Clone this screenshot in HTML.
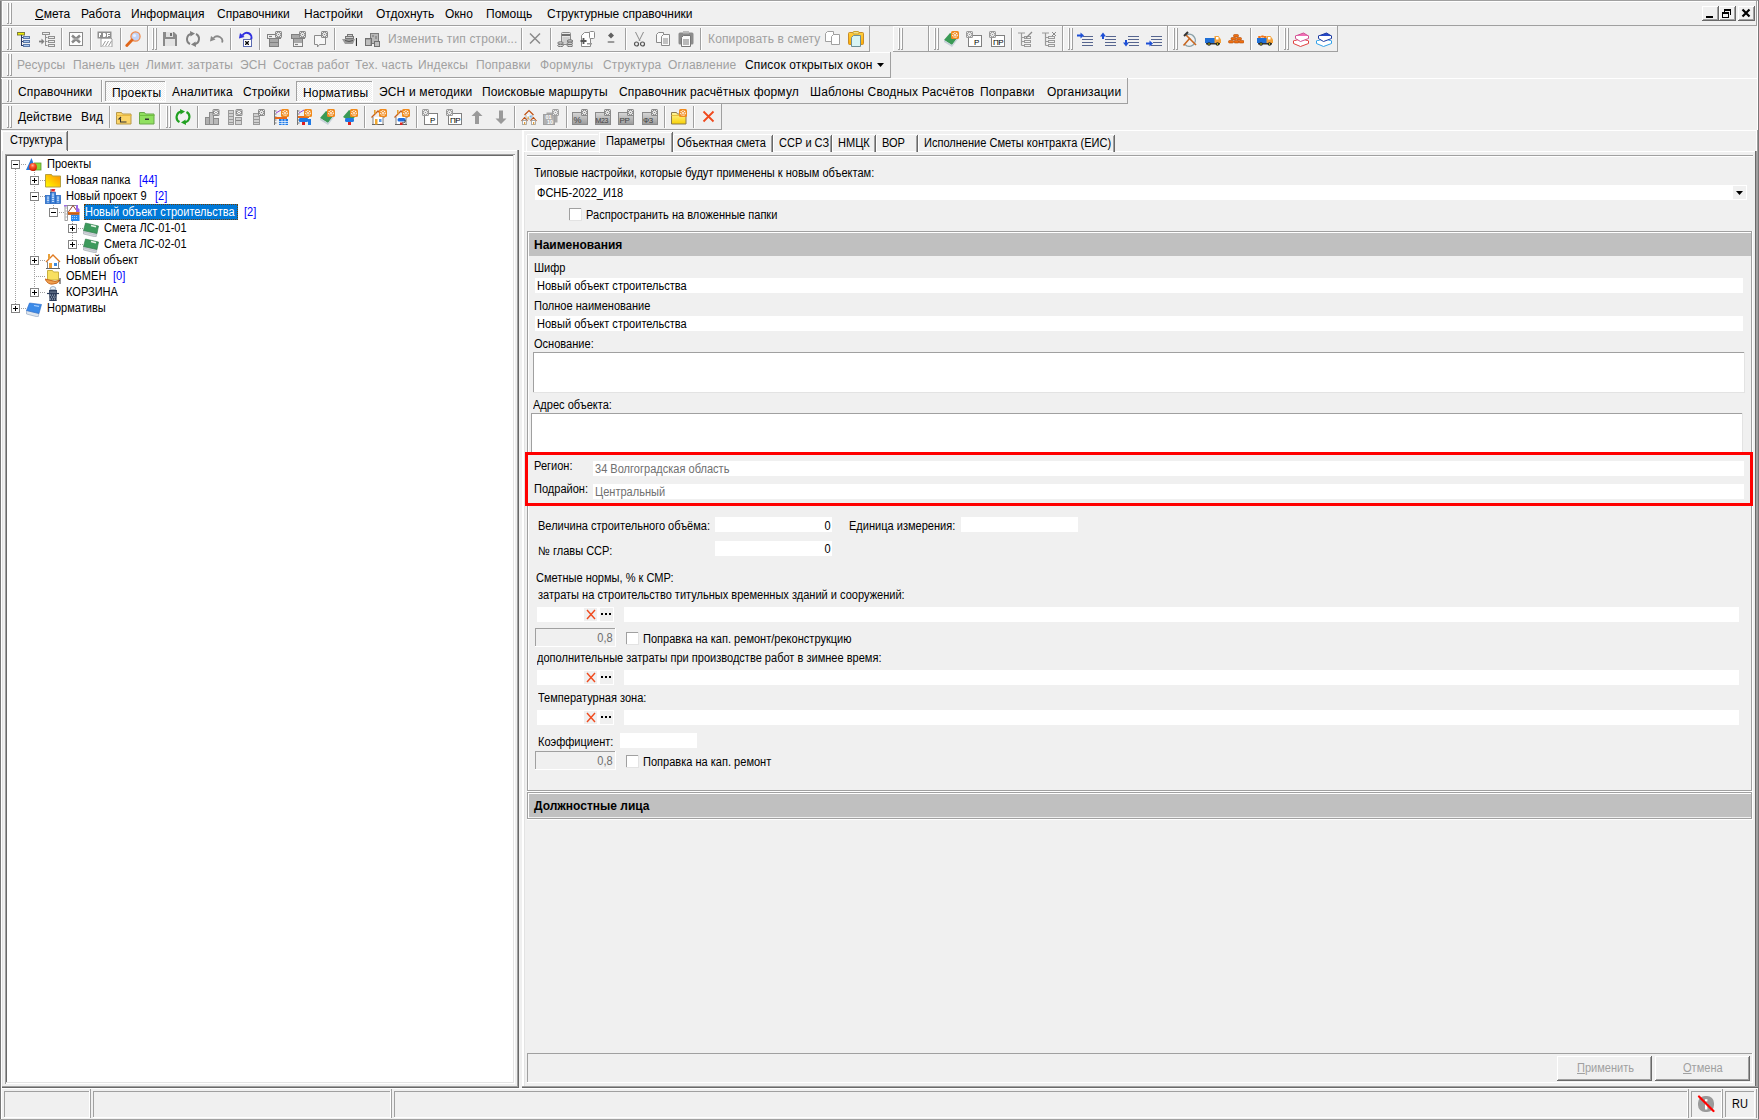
<!DOCTYPE html>
<html><head><meta charset="utf-8">
<style>
html,body{margin:0;padding:0;}
body{width:1759px;height:1120px;overflow:hidden;position:relative;background:#f0f0f0;font-family:"Liberation Sans",sans-serif;}
div,span,svg{position:absolute;}
.t{white-space:pre;line-height:1;}
</style></head><body>
<div style="left:0px;top:0px;width:1px;height:1120px;background:#787878;"></div>
<div style="left:0px;top:0px;width:1759px;height:1px;background:#a0a0a0;"></div>
<div style="left:1px;top:1px;width:1px;height:129px;background:#a0a0a0;"></div>
<div style="left:1px;top:130px;width:1px;height:989px;background:#ffffff;"></div>
<div style="left:2px;top:1px;width:1756px;height:1px;background:#ffffff;"></div>
<div style="left:1758px;top:0px;width:1px;height:1120px;background:#787878;"></div>
<div style="left:0px;top:1119px;width:1759px;height:1px;background:#a0a0a0;"></div>
<div style="left:1757px;top:1px;width:1px;height:129px;background:#ffffff;"></div>
<div style="left:2px;top:1px;width:1755px;height:1px;background:#ffffff;"></div>
<div style="left:2px;top:1px;width:1px;height:25px;background:#ffffff;"></div>
<div style="left:2px;top:25px;width:1755px;height:1px;background:#a0a0a0;"></div>
<div style="left:1756px;top:1px;width:1px;height:25px;background:#a0a0a0;"></div>
<div style="left:7px;top:3px;width:1px;height:21px;background:#ffffff;"></div>
<div style="left:8px;top:3px;width:1px;height:21px;background:#a0a0a0;"></div>
<div style="left:7px;top:23px;width:1px;height:1px;background:#a0a0a0;"></div>
<div style="left:10px;top:3px;width:1px;height:21px;background:#ffffff;"></div>
<div style="left:11px;top:3px;width:1px;height:21px;background:#a0a0a0;"></div>
<div style="left:10px;top:23px;width:1px;height:1px;background:#a0a0a0;"></div>
<span class="t" style="left:35px;top:7.84px;font-size:12px;color:#000;"><u>С</u>мета</span>
<span class="t" style="left:81px;top:7.84px;font-size:12px;color:#000;">Работа</span>
<span class="t" style="left:131px;top:7.84px;font-size:12px;color:#000;">Информация</span>
<span class="t" style="left:217px;top:7.84px;font-size:12px;color:#000;">Справочники</span>
<span class="t" style="left:304px;top:7.84px;font-size:12px;color:#000;">Настройки</span>
<span class="t" style="left:376px;top:7.84px;font-size:12px;color:#000;">Отдохнуть</span>
<span class="t" style="left:445px;top:7.84px;font-size:12px;color:#000;">Окно</span>
<span class="t" style="left:486px;top:7.84px;font-size:12px;color:#000;">Помощь</span>
<span class="t" style="left:547px;top:7.84px;font-size:12px;color:#000;">Структурные справочники</span>
<div style="left:1702px;top:6px;width:17px;height:15px;background:#f0f0f0;"></div>
<div style="left:1702px;top:6px;width:17px;height:1px;background:#ffffff;"></div>
<div style="left:1702px;top:6px;width:1px;height:15px;background:#ffffff;"></div>
<div style="left:1702px;top:20px;width:17px;height:1px;background:#696969;"></div>
<div style="left:1718px;top:6px;width:1px;height:15px;background:#696969;"></div>
<div style="left:1703px;top:19px;width:15px;height:1px;background:#a0a0a0;"></div>
<div style="left:1717px;top:7px;width:1px;height:13px;background:#a0a0a0;"></div>
<div style="left:1719px;top:6px;width:17px;height:15px;background:#f0f0f0;"></div>
<div style="left:1719px;top:6px;width:17px;height:1px;background:#ffffff;"></div>
<div style="left:1719px;top:6px;width:1px;height:15px;background:#ffffff;"></div>
<div style="left:1719px;top:20px;width:17px;height:1px;background:#696969;"></div>
<div style="left:1735px;top:6px;width:1px;height:15px;background:#696969;"></div>
<div style="left:1720px;top:19px;width:15px;height:1px;background:#a0a0a0;"></div>
<div style="left:1734px;top:7px;width:1px;height:13px;background:#a0a0a0;"></div>
<div style="left:1738px;top:6px;width:17px;height:15px;background:#f0f0f0;"></div>
<div style="left:1738px;top:6px;width:17px;height:1px;background:#ffffff;"></div>
<div style="left:1738px;top:6px;width:1px;height:15px;background:#ffffff;"></div>
<div style="left:1738px;top:20px;width:17px;height:1px;background:#696969;"></div>
<div style="left:1754px;top:6px;width:1px;height:15px;background:#696969;"></div>
<div style="left:1739px;top:19px;width:15px;height:1px;background:#a0a0a0;"></div>
<div style="left:1753px;top:7px;width:1px;height:13px;background:#a0a0a0;"></div>
<div style="left:1706px;top:16px;width:7px;height:2px;background:#000;"></div>
<div style="left:1724px;top:9px;width:7px;height:2px;background:#000;"></div>
<div style="left:1730px;top:11px;width:1px;height:4px;background:#000;"></div>
<div style="left:1724px;top:11px;width:1px;height:1px;background:#000;"></div>
<div style="left:1722px;top:12px;width:7px;height:2px;background:#000;"></div>
<div style="left:1722px;top:14px;width:1px;height:4px;background:#000;"></div>
<div style="left:1728px;top:14px;width:1px;height:4px;background:#000;"></div>
<div style="left:1722px;top:17px;width:7px;height:1px;background:#000;"></div>
<svg style="left:1741px;top:8px;" width="11" height="11" viewBox="0 0 11 11"><path d="M1.5 1.5L8.5 8.5M8.5 1.5L1.5 8.5" stroke="#000" stroke-width="2.2"/></svg>
<div style="left:2px;top:26px;width:146px;height:1px;background:#ffffff;"></div>
<div style="left:2px;top:26px;width:1px;height:26px;background:#ffffff;"></div>
<div style="left:2px;top:51px;width:146px;height:1px;background:#a0a0a0;"></div>
<div style="left:147px;top:26px;width:1px;height:26px;background:#a0a0a0;"></div>
<div style="left:148px;top:26px;width:722px;height:1px;background:#ffffff;"></div>
<div style="left:148px;top:26px;width:1px;height:26px;background:#ffffff;"></div>
<div style="left:148px;top:51px;width:722px;height:1px;background:#a0a0a0;"></div>
<div style="left:869px;top:26px;width:1px;height:26px;background:#a0a0a0;"></div>
<div style="left:893px;top:26px;width:36px;height:1px;background:#ffffff;"></div>
<div style="left:893px;top:26px;width:1px;height:26px;background:#ffffff;"></div>
<div style="left:893px;top:51px;width:36px;height:1px;background:#a0a0a0;"></div>
<div style="left:928px;top:26px;width:1px;height:26px;background:#a0a0a0;"></div>
<div style="left:929px;top:26px;width:134px;height:1px;background:#ffffff;"></div>
<div style="left:929px;top:26px;width:1px;height:26px;background:#ffffff;"></div>
<div style="left:929px;top:51px;width:134px;height:1px;background:#a0a0a0;"></div>
<div style="left:1062px;top:26px;width:1px;height:26px;background:#a0a0a0;"></div>
<div style="left:1063px;top:26px;width:105px;height:1px;background:#ffffff;"></div>
<div style="left:1063px;top:26px;width:1px;height:26px;background:#ffffff;"></div>
<div style="left:1063px;top:51px;width:105px;height:1px;background:#a0a0a0;"></div>
<div style="left:1167px;top:26px;width:1px;height:26px;background:#a0a0a0;"></div>
<div style="left:1168px;top:26px;width:111px;height:1px;background:#ffffff;"></div>
<div style="left:1168px;top:26px;width:1px;height:26px;background:#ffffff;"></div>
<div style="left:1168px;top:51px;width:111px;height:1px;background:#a0a0a0;"></div>
<div style="left:1278px;top:26px;width:1px;height:26px;background:#a0a0a0;"></div>
<div style="left:1279px;top:26px;width:59px;height:1px;background:#ffffff;"></div>
<div style="left:1279px;top:26px;width:1px;height:26px;background:#ffffff;"></div>
<div style="left:1279px;top:51px;width:59px;height:1px;background:#a0a0a0;"></div>
<div style="left:1337px;top:26px;width:1px;height:26px;background:#a0a0a0;"></div>
<div style="left:2px;top:52px;width:889px;height:1px;background:#ffffff;"></div>
<div style="left:2px;top:52px;width:1px;height:26px;background:#ffffff;"></div>
<div style="left:2px;top:77px;width:889px;height:1px;background:#a0a0a0;"></div>
<div style="left:890px;top:52px;width:1px;height:26px;background:#a0a0a0;"></div>
<div style="left:1px;top:78px;width:1757px;height:1px;background:#ffffff;"></div>
<div style="left:2px;top:78px;width:1126px;height:1px;background:#ffffff;"></div>
<div style="left:2px;top:78px;width:1px;height:26px;background:#ffffff;"></div>
<div style="left:2px;top:103px;width:1126px;height:1px;background:#a0a0a0;"></div>
<div style="left:1127px;top:78px;width:1px;height:26px;background:#a0a0a0;"></div>
<div style="left:2px;top:104px;width:158px;height:1px;background:#ffffff;"></div>
<div style="left:2px;top:104px;width:1px;height:26px;background:#ffffff;"></div>
<div style="left:2px;top:129px;width:158px;height:1px;background:#a0a0a0;"></div>
<div style="left:159px;top:104px;width:1px;height:26px;background:#a0a0a0;"></div>
<div style="left:160px;top:104px;width:562px;height:1px;background:#ffffff;"></div>
<div style="left:160px;top:104px;width:1px;height:26px;background:#ffffff;"></div>
<div style="left:160px;top:129px;width:562px;height:1px;background:#a0a0a0;"></div>
<div style="left:721px;top:104px;width:1px;height:26px;background:#a0a0a0;"></div>
<div style="left:7px;top:28px;width:1px;height:22px;background:#ffffff;"></div>
<div style="left:8px;top:28px;width:1px;height:22px;background:#a0a0a0;"></div>
<div style="left:7px;top:49px;width:1px;height:1px;background:#a0a0a0;"></div>
<div style="left:10px;top:28px;width:1px;height:22px;background:#ffffff;"></div>
<div style="left:11px;top:28px;width:1px;height:22px;background:#a0a0a0;"></div>
<div style="left:10px;top:49px;width:1px;height:1px;background:#a0a0a0;"></div>
<div style="left:152px;top:28px;width:1px;height:22px;background:#ffffff;"></div>
<div style="left:153px;top:28px;width:1px;height:22px;background:#a0a0a0;"></div>
<div style="left:152px;top:49px;width:1px;height:1px;background:#a0a0a0;"></div>
<div style="left:155px;top:28px;width:1px;height:22px;background:#ffffff;"></div>
<div style="left:156px;top:28px;width:1px;height:22px;background:#a0a0a0;"></div>
<div style="left:155px;top:49px;width:1px;height:1px;background:#a0a0a0;"></div>
<div style="left:898px;top:28px;width:1px;height:22px;background:#ffffff;"></div>
<div style="left:899px;top:28px;width:1px;height:22px;background:#a0a0a0;"></div>
<div style="left:898px;top:49px;width:1px;height:1px;background:#a0a0a0;"></div>
<div style="left:901px;top:28px;width:1px;height:22px;background:#ffffff;"></div>
<div style="left:902px;top:28px;width:1px;height:22px;background:#a0a0a0;"></div>
<div style="left:901px;top:49px;width:1px;height:1px;background:#a0a0a0;"></div>
<div style="left:934px;top:28px;width:1px;height:22px;background:#ffffff;"></div>
<div style="left:935px;top:28px;width:1px;height:22px;background:#a0a0a0;"></div>
<div style="left:934px;top:49px;width:1px;height:1px;background:#a0a0a0;"></div>
<div style="left:937px;top:28px;width:1px;height:22px;background:#ffffff;"></div>
<div style="left:938px;top:28px;width:1px;height:22px;background:#a0a0a0;"></div>
<div style="left:937px;top:49px;width:1px;height:1px;background:#a0a0a0;"></div>
<div style="left:1068px;top:28px;width:1px;height:22px;background:#ffffff;"></div>
<div style="left:1069px;top:28px;width:1px;height:22px;background:#a0a0a0;"></div>
<div style="left:1068px;top:49px;width:1px;height:1px;background:#a0a0a0;"></div>
<div style="left:1071px;top:28px;width:1px;height:22px;background:#ffffff;"></div>
<div style="left:1072px;top:28px;width:1px;height:22px;background:#a0a0a0;"></div>
<div style="left:1071px;top:49px;width:1px;height:1px;background:#a0a0a0;"></div>
<div style="left:1173px;top:28px;width:1px;height:22px;background:#ffffff;"></div>
<div style="left:1174px;top:28px;width:1px;height:22px;background:#a0a0a0;"></div>
<div style="left:1173px;top:49px;width:1px;height:1px;background:#a0a0a0;"></div>
<div style="left:1176px;top:28px;width:1px;height:22px;background:#ffffff;"></div>
<div style="left:1177px;top:28px;width:1px;height:22px;background:#a0a0a0;"></div>
<div style="left:1176px;top:49px;width:1px;height:1px;background:#a0a0a0;"></div>
<div style="left:1284px;top:28px;width:1px;height:22px;background:#ffffff;"></div>
<div style="left:1285px;top:28px;width:1px;height:22px;background:#a0a0a0;"></div>
<div style="left:1284px;top:49px;width:1px;height:1px;background:#a0a0a0;"></div>
<div style="left:1287px;top:28px;width:1px;height:22px;background:#ffffff;"></div>
<div style="left:1288px;top:28px;width:1px;height:22px;background:#a0a0a0;"></div>
<div style="left:1287px;top:49px;width:1px;height:1px;background:#a0a0a0;"></div>
<div style="left:61px;top:28px;width:1px;height:22px;background:#a0a0a0;"></div>
<div style="left:62px;top:28px;width:1px;height:22px;background:#ffffff;"></div>
<div style="left:90px;top:28px;width:1px;height:22px;background:#a0a0a0;"></div>
<div style="left:91px;top:28px;width:1px;height:22px;background:#ffffff;"></div>
<div style="left:120px;top:28px;width:1px;height:22px;background:#a0a0a0;"></div>
<div style="left:121px;top:28px;width:1px;height:22px;background:#ffffff;"></div>
<div style="left:230px;top:28px;width:1px;height:22px;background:#a0a0a0;"></div>
<div style="left:231px;top:28px;width:1px;height:22px;background:#ffffff;"></div>
<div style="left:259px;top:28px;width:1px;height:22px;background:#a0a0a0;"></div>
<div style="left:260px;top:28px;width:1px;height:22px;background:#ffffff;"></div>
<div style="left:334px;top:28px;width:1px;height:22px;background:#a0a0a0;"></div>
<div style="left:335px;top:28px;width:1px;height:22px;background:#ffffff;"></div>
<div style="left:521px;top:28px;width:1px;height:22px;background:#a0a0a0;"></div>
<div style="left:522px;top:28px;width:1px;height:22px;background:#ffffff;"></div>
<div style="left:550px;top:28px;width:1px;height:22px;background:#a0a0a0;"></div>
<div style="left:551px;top:28px;width:1px;height:22px;background:#ffffff;"></div>
<div style="left:625px;top:28px;width:1px;height:22px;background:#a0a0a0;"></div>
<div style="left:626px;top:28px;width:1px;height:22px;background:#ffffff;"></div>
<div style="left:700px;top:28px;width:1px;height:22px;background:#a0a0a0;"></div>
<div style="left:701px;top:28px;width:1px;height:22px;background:#ffffff;"></div>
<div style="left:1011px;top:28px;width:1px;height:22px;background:#a0a0a0;"></div>
<div style="left:1012px;top:28px;width:1px;height:22px;background:#ffffff;"></div>
<div style="left:1250px;top:28px;width:1px;height:22px;background:#a0a0a0;"></div>
<div style="left:1251px;top:28px;width:1px;height:22px;background:#ffffff;"></div>
<span class="t" style="left:388px;top:32.84px;font-size:12px;color:#a0a0a0;letter-spacing:0.15px;">Изменить тип строки...</span>
<span class="t" style="left:708px;top:32.84px;font-size:12px;color:#a0a0a0;letter-spacing:0.15px;">Копировать в смету</span>
<div style="left:7px;top:54px;width:1px;height:22px;background:#ffffff;"></div>
<div style="left:8px;top:54px;width:1px;height:22px;background:#a0a0a0;"></div>
<div style="left:7px;top:75px;width:1px;height:1px;background:#a0a0a0;"></div>
<div style="left:10px;top:54px;width:1px;height:22px;background:#ffffff;"></div>
<div style="left:11px;top:54px;width:1px;height:22px;background:#a0a0a0;"></div>
<div style="left:10px;top:75px;width:1px;height:1px;background:#a0a0a0;"></div>
<span class="t" style="left:17px;top:58.84px;font-size:12px;color:#a0a0a0;letter-spacing:0.15px;">Ресурсы</span>
<span class="t" style="left:73px;top:58.84px;font-size:12px;color:#a0a0a0;letter-spacing:0.15px;">Панель цен</span>
<span class="t" style="left:146px;top:58.84px;font-size:12px;color:#a0a0a0;letter-spacing:0.15px;">Лимит. затраты</span>
<span class="t" style="left:240px;top:58.84px;font-size:12px;color:#a0a0a0;letter-spacing:0.15px;">ЭСН</span>
<span class="t" style="left:273px;top:58.84px;font-size:12px;color:#a0a0a0;letter-spacing:0.15px;">Состав работ</span>
<span class="t" style="left:355px;top:58.84px;font-size:12px;color:#a0a0a0;letter-spacing:0.15px;">Тех. часть</span>
<span class="t" style="left:418px;top:58.84px;font-size:12px;color:#a0a0a0;letter-spacing:0.15px;">Индексы</span>
<span class="t" style="left:476px;top:58.84px;font-size:12px;color:#a0a0a0;letter-spacing:0.15px;">Поправки</span>
<span class="t" style="left:540px;top:58.84px;font-size:12px;color:#a0a0a0;letter-spacing:0.15px;">Формулы</span>
<span class="t" style="left:603px;top:58.84px;font-size:12px;color:#a0a0a0;letter-spacing:0.15px;">Структура</span>
<span class="t" style="left:668px;top:58.84px;font-size:12px;color:#a0a0a0;letter-spacing:0.15px;">Оглавление</span>
<span class="t" style="left:745px;top:58.84px;font-size:12px;color:#000;letter-spacing:0.15px;">Список открытых окон</span>
<svg style="left:877px;top:63px;" width="7" height="4" viewBox="0 0 7 4"><path d="M0 0h7L3.5 4z" fill="#000"/></svg>
<div style="left:7px;top:80px;width:1px;height:22px;background:#ffffff;"></div>
<div style="left:8px;top:80px;width:1px;height:22px;background:#a0a0a0;"></div>
<div style="left:7px;top:101px;width:1px;height:1px;background:#a0a0a0;"></div>
<div style="left:10px;top:80px;width:1px;height:22px;background:#ffffff;"></div>
<div style="left:11px;top:80px;width:1px;height:22px;background:#a0a0a0;"></div>
<div style="left:10px;top:101px;width:1px;height:1px;background:#a0a0a0;"></div>
<div style="left:101px;top:80px;width:1px;height:22px;background:#a0a0a0;"></div>
<div style="left:102px;top:80px;width:1px;height:22px;background:#ffffff;"></div>
<div style="left:105px;top:81px;width:61px;height:21px;background:#f0f0f0;background:repeating-conic-gradient(#ffffff 0 25%, #ececec 0 50%) 0 0/2px 2px;"></div>
<div style="left:105px;top:81px;width:61px;height:1px;background:#a0a0a0;"></div>
<div style="left:105px;top:81px;width:1px;height:20px;background:#a0a0a0;"></div>
<div style="left:105px;top:101px;width:61px;height:1px;background:#ffffff;"></div>
<div style="left:165px;top:81px;width:1px;height:21px;background:#ffffff;"></div>
<div style="left:296px;top:81px;width:77px;height:21px;background:#f0f0f0;background:repeating-conic-gradient(#ffffff 0 25%, #ececec 0 50%) 0 0/2px 2px;"></div>
<div style="left:296px;top:81px;width:77px;height:1px;background:#a0a0a0;"></div>
<div style="left:296px;top:81px;width:1px;height:20px;background:#a0a0a0;"></div>
<div style="left:296px;top:101px;width:77px;height:1px;background:#ffffff;"></div>
<div style="left:372px;top:81px;width:1px;height:21px;background:#ffffff;"></div>
<span class="t" style="left:18px;top:85.84px;font-size:12px;color:#000;letter-spacing:0.15px;">Справочники</span>
<span class="t" style="left:112px;top:86.84px;font-size:12px;color:#000;letter-spacing:0.15px;">Проекты</span>
<span class="t" style="left:172px;top:85.84px;font-size:12px;color:#000;letter-spacing:0.15px;">Аналитика</span>
<span class="t" style="left:243px;top:85.84px;font-size:12px;color:#000;letter-spacing:0.15px;">Стройки</span>
<span class="t" style="left:303px;top:86.84px;font-size:12px;color:#000;letter-spacing:0.15px;">Нормативы</span>
<span class="t" style="left:379px;top:85.84px;font-size:12px;color:#000;letter-spacing:0.15px;">ЭСН и методики</span>
<span class="t" style="left:482px;top:85.84px;font-size:12px;color:#000;letter-spacing:0.15px;">Поисковые маршруты</span>
<span class="t" style="left:619px;top:85.84px;font-size:12px;color:#000;letter-spacing:0.15px;">Справочник расчётных формул</span>
<span class="t" style="left:810px;top:85.84px;font-size:12px;color:#000;letter-spacing:0.15px;">Шаблоны Сводных Расчётов</span>
<span class="t" style="left:980px;top:85.84px;font-size:12px;color:#000;letter-spacing:0.15px;">Поправки</span>
<span class="t" style="left:1047px;top:85.84px;font-size:12px;color:#000;letter-spacing:0.15px;">Организации</span>
<div style="left:7px;top:106px;width:1px;height:22px;background:#ffffff;"></div>
<div style="left:8px;top:106px;width:1px;height:22px;background:#a0a0a0;"></div>
<div style="left:7px;top:127px;width:1px;height:1px;background:#a0a0a0;"></div>
<div style="left:10px;top:106px;width:1px;height:22px;background:#ffffff;"></div>
<div style="left:11px;top:106px;width:1px;height:22px;background:#a0a0a0;"></div>
<div style="left:10px;top:127px;width:1px;height:1px;background:#a0a0a0;"></div>
<span class="t" style="left:18px;top:110.84px;font-size:12px;color:#000;letter-spacing:0.15px;">Действие</span>
<span class="t" style="left:81px;top:110.84px;font-size:12px;color:#000;letter-spacing:0.15px;">Вид</span>
<div style="left:109px;top:106px;width:1px;height:22px;background:#a0a0a0;"></div>
<div style="left:110px;top:106px;width:1px;height:22px;background:#ffffff;"></div>
<div style="left:166px;top:106px;width:1px;height:22px;background:#ffffff;"></div>
<div style="left:167px;top:106px;width:1px;height:22px;background:#a0a0a0;"></div>
<div style="left:166px;top:127px;width:1px;height:1px;background:#a0a0a0;"></div>
<div style="left:169px;top:106px;width:1px;height:22px;background:#ffffff;"></div>
<div style="left:170px;top:106px;width:1px;height:22px;background:#a0a0a0;"></div>
<div style="left:169px;top:127px;width:1px;height:1px;background:#a0a0a0;"></div>
<div style="left:197px;top:106px;width:1px;height:22px;background:#a0a0a0;"></div>
<div style="left:198px;top:106px;width:1px;height:22px;background:#ffffff;"></div>
<div style="left:364px;top:106px;width:1px;height:22px;background:#a0a0a0;"></div>
<div style="left:365px;top:106px;width:1px;height:22px;background:#ffffff;"></div>
<div style="left:416px;top:106px;width:1px;height:22px;background:#a0a0a0;"></div>
<div style="left:417px;top:106px;width:1px;height:22px;background:#ffffff;"></div>
<div style="left:514px;top:106px;width:1px;height:22px;background:#a0a0a0;"></div>
<div style="left:515px;top:106px;width:1px;height:22px;background:#ffffff;"></div>
<div style="left:566px;top:106px;width:1px;height:22px;background:#a0a0a0;"></div>
<div style="left:567px;top:106px;width:1px;height:22px;background:#ffffff;"></div>
<div style="left:664px;top:106px;width:1px;height:22px;background:#a0a0a0;"></div>
<div style="left:665px;top:106px;width:1px;height:22px;background:#ffffff;"></div>
<div style="left:693px;top:106px;width:1px;height:22px;background:#a0a0a0;"></div>
<div style="left:694px;top:106px;width:1px;height:22px;background:#ffffff;"></div>
<svg style="left:16px;top:31px;" width="16" height="16" viewBox="0 0 16 16"><rect x="1.5" y="1.5" width="7" height="2.5" fill="#f0f000" stroke="#7d7d3a"/><path d="M5.5 4v11M5.5 6.5h2M5.5 10.5h2M5.5 14.5h2" stroke="#2b3a67" fill="none"/><rect x="7.5" y="5.5" width="6" height="2" fill="#a9c8f0" stroke="#5d79a8"/><rect x="7.5" y="9.5" width="6" height="2" fill="#a9c8f0" stroke="#5d79a8"/><rect x="7.5" y="13.5" width="6" height="2" fill="#a9c8f0" stroke="#5d79a8"/></svg>
<svg style="left:39px;top:31px;" width="16" height="16" viewBox="0 0 16 16"><rect x="3.5" y="1.5" width="7" height="2" fill="#eee" stroke="#909090"/><path d="M6.5 4v11M6.5 6.5h2M6.5 10.5h2M6.5 14.5h2" stroke="#909090" fill="none"/><rect x="9.5" y="5.5" width="6" height="2" fill="#eee" stroke="#909090"/><rect x="9.5" y="9.5" width="6" height="2" fill="#eee" stroke="#909090"/><rect x="9.5" y="13.5" width="6" height="2" fill="#eee" stroke="#909090"/><path d="M0 10.5h3" stroke="#808080" stroke-width="1.8"/><path d="M2.5 7.5l3 3-3 3z" fill="#808080"/></svg>
<svg style="left:68px;top:31px;" width="16" height="16" viewBox="0 0 16 16"><rect x="1.5" y="1.5" width="13" height="13" fill="#fff" stroke="#8a8a8a"/><path d="M4 4.5l8 7M12 4.5l-8 7" stroke="#8a8a8a" stroke-width="2.6"/><path d="M4 8h8" stroke="#c8c8c8" stroke-width="0.8"/></svg>
<svg style="left:97px;top:31px;" width="16" height="16" viewBox="0 0 16 16"><path d="M4 7h10l1 1v8H4z" fill="#fff" stroke="#a0a0a0"/><rect x="0.5" y="0.5" width="14" height="7" fill="#8f8f8f"/><path d="M2 2h2v2H3v2H2zM6 2h2l1 1v2l-1 1H6zM10 2h3v1h-2v1h2v1h-2v1h-1z" fill="#fff"/><path d="M5.5 15l3-5M8.5 15l3-5M11.5 15l3-5" stroke="#9a9a9a"/></svg>
<svg style="left:125px;top:31px;" width="16" height="16" viewBox="0 0 16 16"><circle cx="10.5" cy="5.5" r="4.6" fill="#c2d2f5" stroke="#f08848" stroke-width="1.2"/><circle cx="9.5" cy="4.5" r="1.6" fill="#e8f0ff"/><path d="M7 9L1.8 14.5" stroke="#e0661a" stroke-width="2.8" stroke-linecap="round"/></svg>
<svg style="left:162px;top:31px;" width="16" height="16" viewBox="0 0 16 16"><path d="M1 1h11l3 3v11H1z" fill="#8a8a8a"/><rect x="4" y="1" width="7" height="5" fill="#e0e0e0"/><rect x="8" y="2" width="2" height="3" fill="#707070"/><rect x="3" y="8" width="10" height="7" fill="#e3e3e3"/></svg>
<svg style="left:185px;top:31px;" width="16" height="16" viewBox="0 0 16 16"><path d="M5 13A5.5 5.5 0 0 1 6.5 2.7" fill="none" stroke="#808080" stroke-width="2"/><path d="M5 0l5 2.5-4.5 3z" fill="#808080"/><path d="M11 3A5.5 5.5 0 0 1 9.5 13.3" fill="none" stroke="#808080" stroke-width="2"/><path d="M11 16l-5-2.5 4.5-3z" fill="#808080"/></svg>
<svg style="left:208px;top:31px;" width="16" height="16" viewBox="0 0 16 16"><path d="M14 11.5A5 4.5 0 0 0 5.5 7" fill="none" stroke="#888" stroke-width="1.8"/><path d="M2 10.5l1-5.5 4.5 3.5z" fill="#888"/></svg>
<svg style="left:238px;top:31px;" width="16" height="16" viewBox="0 0 16 16"><path d="M13 8.5A4.5 4.5 0 0 0 4.5 4.5" fill="none" stroke="#3030e0" stroke-width="2"/><path d="M1 7.5l1-5.5 4.5 4z" fill="#3030e0"/><rect x="5.5" y="8.5" width="8" height="7" fill="#fff" stroke="#5a6ab0"/><path d="M7 10l4 4M11 10l-4 4M9 10v4M7 12h4" stroke="#000" stroke-width="0.9"/></svg>
<svg style="left:266px;top:31px;" width="16" height="16" viewBox="0 0 16 16"><rect x="1.5" y="3.5" width="13" height="4" fill="#f2f2f2" stroke="#808080"/><rect x="3.5" y="7.5" width="9" height="8" fill="#a8a8a8" stroke="#808080"/><path d="M4 11.5h8" stroke="#808080"/><path d="M3 5.5h3" stroke="#808080" stroke-width="1.2"/><rect x="9.0" y="0.0" width="7" height="7" rx="1.5" fill="#8a8a8a"/><path d="M12.5 1.2999999999999998L14.7 3.5L12.5 5.7L10.3 3.5z" fill="#fff"/><circle cx="12.5" cy="3.5" r="0.8" fill="#8a8a8a"/><path d="M10.0 1.0l1 1M15.0 1.0l-1 1M10.0 6.0l1-1M15.0 6.0l-1-1" stroke="#fff" stroke-width="0.8"/></svg>
<svg style="left:290px;top:31px;" width="16" height="16" viewBox="0 0 16 16"><rect x="1.5" y="3.5" width="13" height="4" fill="#a8a8a8" stroke="#808080"/><rect x="3.5" y="7.5" width="9" height="8" fill="#a8a8a8" stroke="#808080"/><rect x="4" y="12" width="8" height="3" fill="#f2f2f2"/><path d="M5 13.5h3" stroke="#808080" stroke-width="1.2"/><rect x="9.0" y="0.0" width="7" height="7" rx="1.5" fill="#8a8a8a"/><path d="M12.5 1.2999999999999998L14.7 3.5L12.5 5.7L10.3 3.5z" fill="#fff"/><circle cx="12.5" cy="3.5" r="0.8" fill="#8a8a8a"/><path d="M10.0 1.0l1 1M15.0 1.0l-1 1M10.0 6.0l1-1M15.0 6.0l-1-1" stroke="#fff" stroke-width="0.8"/></svg>
<svg style="left:312px;top:31px;" width="16" height="16" viewBox="0 0 16 16"><path d="M2.5 4.5h11v9h-6l-2 2.5v-2.5h-3z" fill="#f6f6f6" stroke="#8a8a8a" stroke-linejoin="round"/><rect x="9.0" y="0.0" width="7" height="7" rx="1.5" fill="#8a8a8a"/><path d="M12.5 1.2999999999999998L14.7 3.5L12.5 5.7L10.3 3.5z" fill="#fff"/><circle cx="12.5" cy="3.5" r="0.8" fill="#8a8a8a"/><path d="M10.0 1.0l1 1M15.0 1.0l-1 1M10.0 6.0l1-1M15.0 6.0l-1-1" stroke="#fff" stroke-width="0.8"/></svg>
<svg style="left:341px;top:31px;" width="16" height="16" viewBox="0 0 16 16"><rect x="6.5" y="3.5" width="5" height="2" fill="#ccc" stroke="#777"/><rect x="4.5" y="5.5" width="8" height="2" fill="#ccc" stroke="#777"/><path d="M1 8h13l-2 5H4z" fill="#9a9a9a"/><path d="M4 9.5q4 2 8 0" stroke="#555" fill="none"/><path d="M15.5 7v8" stroke="#333" stroke-width="1.2"/></svg>
<svg style="left:364px;top:31px;" width="16" height="16" viewBox="0 0 16 16"><rect x="6.5" y="2.5" width="8" height="10" fill="#b8b8b8" stroke="#7a7a7a"/><rect x="1.5" y="7.5" width="6" height="7" fill="#a0a0a0" stroke="#707070"/><path d="M3 9v5M5 9v5" stroke="#ddd"/><rect x="10.5" y="10.5" width="5" height="5" fill="#c0c0c0" stroke="#707070"/><path d="M8 5h2M12 5v3" stroke="#707070"/></svg>
<svg style="left:528px;top:31px;" width="16" height="16" viewBox="0 0 16 16"><path d="M2 2.5l10 10M12 2.5l-10 10" stroke="#8a8a8a" stroke-width="1.5"/></svg>
<svg style="left:557px;top:31px;" width="16" height="16" viewBox="0 0 16 16"><rect x="4.5" y="1.5" width="9" height="12" rx="1" fill="#e6e6e6" stroke="#8a8a8a"/><rect x="5" y="3" width="8" height="2" fill="#707070"/><path d="M5 7h8M5 9h8M5 11h8M7 6v7M9 6v7M11 6v7" stroke="#bbb" stroke-width="0.6"/><g fill="#d8d8d8" stroke="#707070"><ellipse cx="3.5" cy="12" rx="2.8" ry="1.2"/><ellipse cx="3.5" cy="14.5" rx="2.8" ry="1.2"/><ellipse cx="13" cy="10" rx="2.8" ry="1.2"/><ellipse cx="13" cy="12.3" rx="2.8" ry="1.2"/><ellipse cx="13" cy="14.6" rx="2.8" ry="1.2"/></g></svg>
<svg style="left:580px;top:31px;" width="16" height="16" viewBox="0 0 16 16"><path d="M1.5 4.5l3-3h6v14h-9z" fill="#fff" stroke="#8a8a8a"/><rect x="9.5" y="0.5" width="5" height="7" rx="1" fill="#fff" stroke="#8a8a8a"/><path d="M0.5 10h6M3.5 7v6" stroke="#555" stroke-width="1.8"/><rect x="7" y="12" width="5" height="1.5" fill="#999"/></svg>
<svg style="left:606px;top:31px;" width="16" height="16" viewBox="0 0 16 16"><path d="M2 4.5l3-3 3 3-3 3z" fill="#606060"/><rect x="1.5" y="10" width="7" height="2" rx="1" fill="#9a9a9a"/></svg>
<svg style="left:632px;top:31px;" width="16" height="16" viewBox="0 0 16 16"><path d="M3.5 1l4.5 9M11.5 1L7 10" stroke="#8a8a8a" fill="none"/><circle cx="4.5" cy="13" r="2" fill="none" stroke="#555" stroke-width="1.2"/><circle cx="10.5" cy="13" r="2" fill="none" stroke="#555" stroke-width="1.2"/></svg>
<svg style="left:655px;top:31px;" width="16" height="16" viewBox="0 0 16 16"><path d="M1.5 3.5l2-2h5v10h-7z" fill="#fafafa" stroke="#8a8a8a"/><path d="M6.5 5.5l2-2h6v11h-8z" fill="#fafafa" stroke="#8a8a8a"/><path d="M8 8h5M8 10h5M8 12h5" stroke="#888"/></svg>
<svg style="left:678px;top:31px;" width="16" height="16" viewBox="0 0 16 16"><rect x="0.5" y="1.5" width="15" height="12" rx="1.5" fill="#8c8c8c"/><rect x="5" y="0" width="6" height="2.5" fill="#bbb"/><path d="M3.5 6.5l2-2h7v11h-9z" fill="#fafafa" stroke="#777"/><path d="M5 9h6M5 11h6M5 13h6" stroke="#777"/></svg>
<svg style="left:825px;top:31px;" width="16" height="16" viewBox="0 0 16 16"><path d="M0.5 2.5l2-2h6v10h-8z" fill="#fff" stroke="#a0a0a0"/><path d="M6.5 5.5l2-2h6v10h-8z" fill="#fff" stroke="#a0a0a0"/></svg>
<svg style="left:848px;top:31px;" width="16" height="16" viewBox="0 0 16 16"><defs><linearGradient id="cy" x1="0" y1="0" x2="0" y2="1"><stop offset="0" stop-color="#ffd040"/><stop offset="1" stop-color="#ffa800"/></linearGradient></defs><rect x="0.5" y="1.5" width="15" height="12" rx="1" fill="url(#cy)" stroke="#c98d28"/><rect x="5" y="0.5" width="6" height="2.5" rx="1" fill="#f5e48a" stroke="#c9a030"/><path d="M3.5 6.5l2-2h7v11h-9z" fill="#d8f4f4" stroke="#6c8f96"/></svg>
<svg style="left:943px;top:31px;" width="16" height="16" viewBox="0 0 16 16"><path d="M1 9l6-7 8 4-6 8z" fill="#3a9a55"/><path d="M1 9l8 5 6-8v2l-6 8-8-5z" fill="#c5d0d8"/><rect x="8" y="0" width="8" height="8" rx="1.5" fill="#f08a1c"/><circle cx="12" cy="4" r="2.3" fill="none" stroke="#fff" stroke-width="1.1" stroke-dasharray="1.2 0.6"/><circle cx="12" cy="4" r="0.9" fill="#fff"/></svg>
<svg style="left:966px;top:31px;" width="16" height="16" viewBox="0 0 16 16"><rect x="2.5" y="4.5" width="13" height="11" fill="#fff" stroke="#808080"/><rect x="0.0" y="0.0" width="7" height="7" rx="1.5" fill="#9a9a9a"/><path d="M3.5 1.2999999999999998L5.7 3.5L3.5 5.7L1.2999999999999998 3.5z" fill="#fff"/><circle cx="3.5" cy="3.5" r="0.8" fill="#9a9a9a"/><path d="M1.0 1.0l1 1M6.0 1.0l-1 1M1.0 6.0l1-1M6.0 6.0l-1-1" stroke="#fff" stroke-width="0.8"/><text x="8" y="14" font-size="8" font-family="Liberation Sans" fill="#000">P</text></svg>
<svg style="left:989px;top:31px;" width="16" height="16" viewBox="0 0 16 16"><rect x="2.5" y="4.5" width="13" height="11" fill="#fff" stroke="#808080"/><rect x="0.0" y="0.0" width="7" height="7" rx="1.5" fill="#9a9a9a"/><path d="M3.5 1.2999999999999998L5.7 3.5L3.5 5.7L1.2999999999999998 3.5z" fill="#fff"/><circle cx="3.5" cy="3.5" r="0.8" fill="#9a9a9a"/><path d="M1.0 1.0l1 1M6.0 1.0l-1 1M1.0 6.0l1-1M6.0 6.0l-1-1" stroke="#fff" stroke-width="0.8"/><text x="4" y="14" font-size="8" font-family="Liberation Sans" fill="#000" letter-spacing="-0.6">ПР</text></svg>
<svg style="left:1017px;top:31px;" width="16" height="16" viewBox="0 0 16 16"><path d="M1 2h7M4.5 2v12.5M4.5 6.5h3M4.5 10.5h3M4.5 14.5h3" stroke="#9a9a9a" fill="none" stroke-width="1.2"/><rect x="7.5" y="5.5" width="6" height="2" fill="none" stroke="#9a9a9a"/><rect x="7.5" y="9.5" width="6" height="2" fill="none" stroke="#9a9a9a"/><rect x="7.5" y="13.5" width="6" height="2" fill="none" stroke="#9a9a9a"/><path d="M9 7l6-6" stroke="#8a8a8a" stroke-width="1.3"/></svg>
<svg style="left:1041px;top:31px;" width="16" height="16" viewBox="0 0 16 16"><path d="M1 2h7M4.5 2v12.5M4.5 6.5h3M4.5 10.5h3M4.5 14.5h3" stroke="#9a9a9a" fill="none" stroke-width="1.2"/><rect x="7.5" y="5.5" width="6" height="2" fill="none" stroke="#9a9a9a"/><rect x="7.5" y="9.5" width="6" height="2" fill="none" stroke="#9a9a9a"/><rect x="7.5" y="13.5" width="6" height="2" fill="none" stroke="#9a9a9a"/><path d="M11 1l4 4M15 1l-4 4" stroke="#8a8a8a"/></svg>
<svg style="left:1077px;top:31px;" width="16" height="16" viewBox="0 0 16 16"><path d="M0 4.5h4" stroke="#1d4fd6" stroke-width="2"/><path d="M3.5 1.5l3.5 3-3.5 3z" fill="#1d4fd6"/><path d="M6 5.5h10M5 8.5h11M5 11.5h11M5 14.5h11" stroke="#56658f" stroke-width="1.1"/></svg>
<svg style="left:1100px;top:31px;" width="16" height="16" viewBox="0 0 16 16"><path d="M3 8v-3" stroke="#1d4fd6" stroke-width="2"/><path d="M0 5.5l3-4 3 4z" fill="#1d4fd6"/><path d="M6 5.5h10M5 8.5h11M5 11.5h11M5 14.5h11" stroke="#56658f" stroke-width="1.1"/></svg>
<svg style="left:1123px;top:31px;" width="16" height="16" viewBox="0 0 16 16"><path d="M3 9v3" stroke="#1d4fd6" stroke-width="2"/><path d="M0 11.5l3 4 3-4z" fill="#1d4fd6"/><path d="M5 5.5h11M5 8.5h11M5 11.5h11M6 14.5h10" stroke="#56658f" stroke-width="1.1"/></svg>
<svg style="left:1146px;top:31px;" width="16" height="16" viewBox="0 0 16 16"><path d="M0 12.5h4" stroke="#1d4fd6" stroke-width="2"/><path d="M3.5 9.5l3.5 3-3.5 3z" fill="#1d4fd6"/><path d="M5 5.5h11M5 8.5h11M7 11.5h9M5 14.5h11" stroke="#56658f" stroke-width="1.1"/></svg>
<svg style="left:1182px;top:31px;" width="16" height="16" viewBox="0 0 16 16"><path d="M4.5 4A6 6 0 1 1 3 13.5" fill="none" stroke="#8aa0a8" stroke-width="1.4"/><path d="M4 4l10 10" stroke="#c9661e" stroke-width="1.6"/><path d="M1.5 14.5L8 7" stroke="#c9661e" stroke-width="1.6"/><path d="M2 5l4-4" stroke="#333" stroke-width="2"/></svg>
<svg style="left:1205px;top:31px;" width="16" height="16" viewBox="0 0 16 16"><rect x="0" y="7" width="10" height="5" fill="#1f6fd6"/><path d="M9.5 5h4l2.5 3.5V12H9.5z" fill="#f3a23a"/><rect x="11" y="6" width="2.5" height="2.5" fill="#fff"/><rect x="1" y="12" width="14" height="1.5" fill="#333"/><circle cx="4" cy="13" r="1.8" fill="#222"/><circle cx="12.5" cy="13" r="1.8" fill="#222"/><circle cx="4" cy="13" r="0.7" fill="#ff0"/><circle cx="12.5" cy="13" r="0.7" fill="#ff0"/></svg>
<svg style="left:1228px;top:31px;" width="16" height="16" viewBox="0 0 16 16"><g fill="#f07010" stroke="#b04a08" stroke-width="0.6"><rect x="5.5" y="3.5" width="5" height="2.5" rx="1"/><rect x="3" y="6.5" width="5" height="2.5" rx="1"/><rect x="8.5" y="6.5" width="5" height="2.5" rx="1"/><rect x="0.5" y="9.5" width="5" height="2.5" rx="1"/><rect x="6" y="9.5" width="5" height="2.5" rx="1"/><rect x="11" y="9.5" width="5" height="2.5" rx="1"/></g></svg>
<svg style="left:1257px;top:31px;" width="16" height="16" viewBox="0 0 16 16"><rect x="0" y="7" width="10" height="5" fill="#1f6fd6"/><g fill="#f07010"><rect x="1" y="5" width="3" height="2" rx="1"/><rect x="4" y="4.5" width="3" height="2" rx="1"/><rect x="6.5" y="5" width="3" height="2" rx="1"/></g><path d="M9.5 5h4l2.5 3.5V12H9.5z" fill="#f3a23a"/><rect x="11" y="6" width="2.5" height="2.5" fill="#fff"/><rect x="1" y="12" width="14" height="1.5" fill="#333"/><circle cx="4" cy="13" r="1.8" fill="#222"/><circle cx="12.5" cy="13" r="1.8" fill="#222"/><circle cx="4" cy="13" r="0.7" fill="#ff0"/><circle cx="12.5" cy="13" r="0.7" fill="#ff0"/></svg>
<svg style="left:1293px;top:31px;" width="16" height="16" viewBox="0 0 16 16"><path d="M0.5 10l8-2.5 7 2.5-8 3z" fill="#fff" stroke="#e04040"/><path d="M0.5 10v2.5l7 3 8-3V10" fill="#fff" stroke="#e04040"/><path d="M2.5 5l8-3 5 3-8 3z" fill="#f070b8" stroke="#d04f90"/><path d="M2.5 5v2.5l5 3 8-3V5" fill="#fff" stroke="#d04f90"/></svg>
<svg style="left:1316px;top:31px;" width="16" height="16" viewBox="0 0 16 16"><path d="M0.5 10l8-2.5 7 2.5-8 3z" fill="#fff" stroke="#30a0e8"/><path d="M0.5 10v2.5l7 3 8-3V10" fill="#fff" stroke="#30a0e8"/><path d="M2.5 5l8-3 5 3-8 3z" fill="#2848c8" stroke="#1a38a0"/><path d="M2.5 5v2.5l5 3 8-3V5" fill="#fff" stroke="#1a38a0"/></svg>
<svg style="left:116px;top:109px;" width="16" height="16" viewBox="0 0 16 16"><path d="M0.5 3.5h5l1 1.5h8.5v10h-14.5z" fill="#fbd468" stroke="#b89a4a"/><path d="M0.5 6.5h15" stroke="#e8b840"/><path d="M5 8l-2 2h1.5v3h6" stroke="#333" fill="none" stroke-width="1.1"/></svg>
<svg style="left:139px;top:109px;" width="16" height="16" viewBox="0 0 16 16"><path d="M0.5 3.5h5l1 1.5h8.5v10h-14.5z" fill="#90e060" stroke="#6aa84a"/><path d="M0.5 6.5h15" stroke="#70c040"/><rect x="6" y="9.5" width="4" height="1.5" fill="#333"/></svg>
<svg style="left:175px;top:109px;" width="16" height="16" viewBox="0 0 16 16"><path d="M4.5 13A5.5 5.5 0 0 1 6.5 2.7" fill="none" stroke="#21a021" stroke-width="2.2"/><path d="M5 0l5 2.5-4.5 3z" fill="#21a021"/><path d="M11.5 3A5.5 5.5 0 0 1 9.5 13.3" fill="none" stroke="#21a021" stroke-width="2.2"/><path d="M11 16l-5-2.5 4.5-3z" fill="#21a021"/></svg>
<svg style="left:204px;top:109px;" width="16" height="16" viewBox="0 0 16 16"><rect x="5.5" y="3.5" width="4" height="12" fill="#c0c0c0" stroke="#8a8a8a"/><rect x="1.5" y="8.5" width="4" height="7" fill="#b0b0b0" stroke="#8a8a8a"/><rect x="9.5" y="9.5" width="5" height="6" fill="#b8b8b8" stroke="#8a8a8a"/><rect x="8.5" y="0.0" width="7" height="7" rx="1.5" fill="#8a8a8a"/><path d="M12 1.2999999999999998L14.2 3.5L12 5.7L9.8 3.5z" fill="#fff"/><circle cx="12" cy="3.5" r="0.8" fill="#8a8a8a"/><path d="M9.5 1.0l1 1M14.5 1.0l-1 1M9.5 6.0l1-1M14.5 6.0l-1-1" stroke="#fff" stroke-width="0.8"/></svg>
<svg style="left:227px;top:109px;" width="16" height="16" viewBox="0 0 16 16"><rect x="1.5" y="1.5" width="5" height="14" fill="#d0d0d0" stroke="#999"/><path d="M2 4.5h4M2 7.5h4M2 10.5h4M2 13.5h4" stroke="#999"/><rect x="8.5" y="8.5" width="6" height="7" fill="#d0d0d0" stroke="#999"/><path d="M9 11.5h5" stroke="#888"/><rect x="8.5" y="0.0" width="7" height="7" rx="1.5" fill="#8a8a8a"/><path d="M12 1.2999999999999998L14.2 3.5L12 5.7L9.8 3.5z" fill="#fff"/><circle cx="12" cy="3.5" r="0.8" fill="#8a8a8a"/><path d="M9.5 1.0l1 1M14.5 1.0l-1 1M9.5 6.0l1-1M14.5 6.0l-1-1" stroke="#fff" stroke-width="0.8"/></svg>
<svg style="left:250px;top:109px;" width="16" height="16" viewBox="0 0 16 16"><rect x="3.5" y="4.5" width="6" height="11" fill="#d0d0d0" stroke="#999"/><path d="M4 7.5h5M4 10.5h5M4 13.5h5" stroke="#999"/><rect x="8.0" y="0.0" width="7" height="7" rx="1.5" fill="#8a8a8a"/><path d="M11.5 1.2999999999999998L13.7 3.5L11.5 5.7L9.3 3.5z" fill="#fff"/><circle cx="11.5" cy="3.5" r="0.8" fill="#8a8a8a"/><path d="M9.0 1.0l1 1M14.0 1.0l-1 1M9.0 6.0l1-1M14.0 6.0l-1-1" stroke="#fff" stroke-width="0.8"/></svg>
<svg style="left:273px;top:109px;" width="16" height="16" viewBox="0 0 16 16"><path d="M1.5 1v15M1.5 2h2M1.5 5h2M1.5 8h2M1.5 11h2M1.5 14h2" stroke="#777"/><path d="M3 4l5-3 3 6" stroke="#9a4ad6" fill="none"/><rect x="2" y="8" width="12" height="2" fill="#e86a1c"/><rect x="6" y="10" width="9" height="6" fill="#1f7ae6"/><path d="M6 12.5h9M6 14.5h9M9 10v6M12 10v6" stroke="#fff" stroke-width="0.7"/><rect x="8" y="0" width="8" height="8" rx="1.5" fill="#f08a1c"/><circle cx="12" cy="4" r="2.3" fill="none" stroke="#fff" stroke-width="1.1" stroke-dasharray="1.2 0.6"/><circle cx="12" cy="4" r="0.9" fill="#fff"/></svg>
<svg style="left:296px;top:109px;" width="16" height="16" viewBox="0 0 16 16"><path d="M1.5 1v15M1.5 2h2M1.5 5h2M1.5 8h2M1.5 11h2M1.5 14h2" stroke="#777"/><path d="M3 4l5-3 3 6" stroke="#9a4ad6" fill="none"/><rect x="2" y="7" width="11" height="2" fill="#e86a1c"/><rect x="3" y="9" width="9" height="4" rx="1" fill="#1f7ae6"/><rect x="6" y="13" width="3" height="3" fill="#e02020"/><rect x="12" y="10" width="3" height="6" fill="#1f7ae6"/><rect x="8" y="0" width="8" height="8" rx="1.5" fill="#f08a1c"/><circle cx="12" cy="4" r="2.3" fill="none" stroke="#fff" stroke-width="1.1" stroke-dasharray="1.2 0.6"/><circle cx="12" cy="4" r="0.9" fill="#fff"/></svg>
<svg style="left:319px;top:109px;" width="16" height="16" viewBox="0 0 16 16"><path d="M1 9l6-7 8 4-6 8z" fill="#3a9a55"/><path d="M1 9l8 5 6-8v2l-6 8-8-5z" fill="#c5d0d8"/><rect x="8" y="0" width="8" height="8" rx="1.5" fill="#f08a1c"/><circle cx="12" cy="4" r="2.3" fill="none" stroke="#fff" stroke-width="1.1" stroke-dasharray="1.2 0.6"/><circle cx="12" cy="4" r="0.9" fill="#fff"/></svg>
<svg style="left:342px;top:109px;" width="16" height="16" viewBox="0 0 16 16"><path d="M1 8l6-7 8 4-6 8z" fill="#3a9a55"/><rect x="3" y="9" width="9" height="4" rx="1.5" fill="#1f7ae6"/><rect x="6" y="13" width="3" height="3" fill="#e02020"/><rect x="8" y="0" width="8" height="8" rx="1.5" fill="#f08a1c"/><circle cx="12" cy="4" r="2.3" fill="none" stroke="#fff" stroke-width="1.1" stroke-dasharray="1.2 0.6"/><circle cx="12" cy="4" r="0.9" fill="#fff"/></svg>
<svg style="left:371px;top:109px;" width="16" height="16" viewBox="0 0 16 16"><path d="M0.5 8.5L7 2l6.5 6.5" fill="none" stroke="#c8601a" stroke-width="1.3"/><rect x="3" y="1" width="1.6" height="4" fill="#e8a030"/><path d="M2 8v7.5h10V8" fill="#fff" stroke="#777" stroke-width="0.9"/><path d="M1 15.5h12" stroke="#666"/><rect x="4" y="10" width="2.5" height="5.5" fill="#f0a830"/><rect x="8" y="10" width="2.5" height="3" fill="#5a9ae8"/><rect x="8" y="0" width="8" height="8" rx="1.5" fill="#f08a1c"/><circle cx="12" cy="4" r="2.3" fill="none" stroke="#fff" stroke-width="1.1" stroke-dasharray="1.2 0.6"/><circle cx="12" cy="4" r="0.9" fill="#fff"/></svg>
<svg style="left:394px;top:109px;" width="16" height="16" viewBox="0 0 16 16"><path d="M0.5 8.5L7 2l6.5 6.5" fill="none" stroke="#c8601a" stroke-width="1.3"/><rect x="3" y="1" width="1.6" height="4" fill="#e8a030"/><path d="M2 8v7.5h10V8" fill="#fff" stroke="#777" stroke-width="0.9"/><path d="M1 15.5h12" stroke="#666"/><rect x="3.5" y="9" width="8" height="3.5" rx="1.5" fill="#1f6fe0"/><path d="M11 11q1 3-3 3" stroke="#333" fill="none"/><rect x="6" y="13.5" width="2.5" height="2.5" fill="#e02020"/><rect x="8" y="0" width="8" height="8" rx="1.5" fill="#f08a1c"/><circle cx="12" cy="4" r="2.3" fill="none" stroke="#fff" stroke-width="1.1" stroke-dasharray="1.2 0.6"/><circle cx="12" cy="4" r="0.9" fill="#fff"/></svg>
<svg style="left:422px;top:109px;" width="16" height="16" viewBox="0 0 16 16"><rect x="2.5" y="4.5" width="13" height="11" fill="#fff" stroke="#808080"/><rect x="0.0" y="0.0" width="7" height="7" rx="1.5" fill="#9a9a9a"/><path d="M3.5 1.2999999999999998L5.7 3.5L3.5 5.7L1.2999999999999998 3.5z" fill="#fff"/><circle cx="3.5" cy="3.5" r="0.8" fill="#9a9a9a"/><path d="M1.0 1.0l1 1M6.0 1.0l-1 1M1.0 6.0l1-1M6.0 6.0l-1-1" stroke="#fff" stroke-width="0.8"/><text x="8" y="14" font-size="8" font-family="Liberation Sans" fill="#000">P</text></svg>
<svg style="left:446px;top:109px;" width="16" height="16" viewBox="0 0 16 16"><rect x="2.5" y="4.5" width="13" height="11" fill="#fff" stroke="#808080"/><rect x="0.0" y="0.0" width="7" height="7" rx="1.5" fill="#9a9a9a"/><path d="M3.5 1.2999999999999998L5.7 3.5L3.5 5.7L1.2999999999999998 3.5z" fill="#fff"/><circle cx="3.5" cy="3.5" r="0.8" fill="#9a9a9a"/><path d="M1.0 1.0l1 1M6.0 1.0l-1 1M1.0 6.0l1-1M6.0 6.0l-1-1" stroke="#fff" stroke-width="0.8"/><text x="4" y="14" font-size="8" font-family="Liberation Sans" fill="#000" letter-spacing="-0.6">ПР</text></svg>
<svg style="left:471px;top:109px;" width="16" height="16" viewBox="0 0 16 16"><path d="M6 1.5l5.5 5.5H8v8H4V7H0.5z" fill="#9a9a9a"/></svg>
<svg style="left:495px;top:109px;" width="16" height="16" viewBox="0 0 16 16"><path d="M6 15l5.5-5.5H8v-8H4v8H0.5z" fill="#9a9a9a"/></svg>
<svg style="left:521px;top:109px;" width="16" height="16" viewBox="0 0 16 16"><path d="M3.5 6L8 1.5 12.5 6" fill="none" stroke="#c05010" stroke-width="1.2"/><path d="M5 6v4h6V6" fill="#fff" stroke="#999" stroke-width="0.8"/><rect x="8.5" y="6.5" width="2" height="2" fill="#6ab0f0"/><path d="M0.5 12l3-3.5 3 3.5M9.5 12l3-3.5 3 3.5" fill="none" stroke="#c05010" stroke-width="1.1"/><rect x="1.5" y="11.5" width="4" height="4" fill="#fff" stroke="#999" stroke-width="0.8"/><rect x="10.5" y="11.5" width="4" height="4" fill="#fff" stroke="#999" stroke-width="0.8"/><rect x="3" y="13" width="1.3" height="2.5" fill="#e0a040"/><rect x="12" y="13" width="1.3" height="2.5" fill="#e0a040"/><rect x="6.5" y="7.5" width="1.3" height="2.5" fill="#e0a040"/></svg>
<svg style="left:543px;top:109px;" width="16" height="16" viewBox="0 0 16 16"><rect x="3.5" y="3.5" width="11" height="10" fill="#a8a8a8"/><rect x="0.5" y="5.5" width="11" height="10" fill="#b0b0b0" stroke="#a0a0a0"/><text x="2.5" y="10" font-size="5.5" fill="#fff" font-family="Liberation Sans" font-weight="bold">01</text><text x="4" y="15" font-size="5.5" fill="#fff" font-family="Liberation Sans" font-weight="bold">10</text><rect x="9.0" y="0.0" width="7" height="7" rx="1.5" fill="#a0a0a0"/><path d="M12.5 1.2999999999999998L14.7 3.5L12.5 5.7L10.3 3.5z" fill="#fff"/><circle cx="12.5" cy="3.5" r="0.8" fill="#a0a0a0"/><path d="M10.0 1.0l1 1M15.0 1.0l-1 1M10.0 6.0l1-1M15.0 6.0l-1-1" stroke="#fff" stroke-width="0.8"/></svg>
<svg style="left:572px;top:109px;" width="16" height="16" viewBox="0 0 16 16"><defs><linearGradient id="gb" x1="0" y1="0" x2="0" y2="1"><stop offset="0" stop-color="#d8d8d8"/><stop offset="1" stop-color="#9a9a9a"/></linearGradient></defs><rect x="0.5" y="3.5" width="15" height="12" fill="url(#gb)" stroke="#8a8a8a"/><text x="1.5" y="14" font-size="9" fill="#404040" font-family="Liberation Sans" letter-spacing="-0.3">%</text><rect x="9.0" y="0.0" width="7" height="7" rx="1.5" fill="#8a8a8a"/><path d="M12.5 1.2999999999999998L14.7 3.5L12.5 5.7L10.3 3.5z" fill="#fff"/><circle cx="12.5" cy="3.5" r="0.8" fill="#8a8a8a"/><path d="M10.0 1.0l1 1M15.0 1.0l-1 1M10.0 6.0l1-1M15.0 6.0l-1-1" stroke="#fff" stroke-width="0.8"/></svg>
<svg style="left:595px;top:109px;" width="16" height="16" viewBox="0 0 16 16"><defs><linearGradient id="gb" x1="0" y1="0" x2="0" y2="1"><stop offset="0" stop-color="#d8d8d8"/><stop offset="1" stop-color="#9a9a9a"/></linearGradient></defs><rect x="0.5" y="3.5" width="15" height="12" fill="url(#gb)" stroke="#8a8a8a"/><text x="0.5" y="14" font-size="7" fill="#404040" font-family="Liberation Sans" letter-spacing="-0.3">M23</text><rect x="9.0" y="0.0" width="7" height="7" rx="1.5" fill="#8a8a8a"/><path d="M12.5 1.2999999999999998L14.7 3.5L12.5 5.7L10.3 3.5z" fill="#fff"/><circle cx="12.5" cy="3.5" r="0.8" fill="#8a8a8a"/><path d="M10.0 1.0l1 1M15.0 1.0l-1 1M10.0 6.0l1-1M15.0 6.0l-1-1" stroke="#fff" stroke-width="0.8"/></svg>
<svg style="left:618px;top:109px;" width="16" height="16" viewBox="0 0 16 16"><defs><linearGradient id="gb" x1="0" y1="0" x2="0" y2="1"><stop offset="0" stop-color="#d8d8d8"/><stop offset="1" stop-color="#9a9a9a"/></linearGradient></defs><rect x="0.5" y="3.5" width="15" height="12" fill="url(#gb)" stroke="#8a8a8a"/><text x="1.5" y="14" font-size="8" fill="#404040" font-family="Liberation Sans" letter-spacing="-0.3">PP</text><rect x="9.0" y="0.0" width="7" height="7" rx="1.5" fill="#8a8a8a"/><path d="M12.5 1.2999999999999998L14.7 3.5L12.5 5.7L10.3 3.5z" fill="#fff"/><circle cx="12.5" cy="3.5" r="0.8" fill="#8a8a8a"/><path d="M10.0 1.0l1 1M15.0 1.0l-1 1M10.0 6.0l1-1M15.0 6.0l-1-1" stroke="#fff" stroke-width="0.8"/></svg>
<svg style="left:642px;top:109px;" width="16" height="16" viewBox="0 0 16 16"><defs><linearGradient id="gb" x1="0" y1="0" x2="0" y2="1"><stop offset="0" stop-color="#d8d8d8"/><stop offset="1" stop-color="#9a9a9a"/></linearGradient></defs><rect x="0.5" y="3.5" width="15" height="12" fill="url(#gb)" stroke="#8a8a8a"/><text x="1" y="14" font-size="8" fill="#404040" font-family="Liberation Sans" letter-spacing="-0.3">Ф3</text><rect x="9.0" y="0.0" width="7" height="7" rx="1.5" fill="#8a8a8a"/><path d="M12.5 1.2999999999999998L14.7 3.5L12.5 5.7L10.3 3.5z" fill="#fff"/><circle cx="12.5" cy="3.5" r="0.8" fill="#8a8a8a"/><path d="M10.0 1.0l1 1M15.0 1.0l-1 1M10.0 6.0l1-1M15.0 6.0l-1-1" stroke="#fff" stroke-width="0.8"/></svg>
<svg style="left:671px;top:109px;" width="16" height="16" viewBox="0 0 16 16"><defs><linearGradient id="fy" x1="0" y1="0" x2="0" y2="1"><stop offset="0" stop-color="#fff6a0"/><stop offset="1" stop-color="#f8d000"/></linearGradient></defs><path d="M0.5 3.5h5l1 1.5h8.5v10h-14.5z" fill="url(#fy)" stroke="#8a7a50"/><path d="M0.5 6.5h15" stroke="#e8c040"/><rect x="8" y="0" width="8" height="8" rx="1.5" fill="#f08a1c"/><circle cx="12" cy="4" r="2.3" fill="none" stroke="#fff" stroke-width="1.1" stroke-dasharray="1.2 0.6"/><circle cx="12" cy="4" r="0.9" fill="#fff"/></svg>
<svg style="left:701px;top:109px;" width="16" height="16" viewBox="0 0 16 16"><path d="M2.5 2.5l10 10M12.5 2.5l-10 10" stroke="#f04a1e" stroke-width="1.8"/></svg>
<div style="left:2px;top:131px;width:66px;height:1px;background:#ffffff;"></div>
<div style="left:2px;top:131px;width:1px;height:20px;background:#ffffff;"></div>
<div style="left:2px;top:150px;width:66px;height:1px;background:#696969;"></div>
<div style="left:67px;top:131px;width:1px;height:20px;background:#696969;"></div>
<div style="left:3px;top:132px;width:64px;height:19px;background:#f0f0f0;"></div>
<div style="left:66px;top:132px;width:1px;height:18px;background:#a0a0a0;"></div>
<div style="left:67px;top:132px;width:1px;height:18px;background:#696969;"></div>
<div style="left:2px;top:131px;width:1px;height:20px;background:#ffffff;"></div>
<div style="left:3px;top:131px;width:63px;height:1px;background:#ffffff;"></div>
<span class="t" style="left:10px;top:133.84px;font-size:12px;color:#000;transform:scaleX(0.92);transform-origin:0 0;">Структура</span>
<div style="left:68px;top:150px;width:450px;height:1px;background:#ffffff;"></div>
<div style="left:2px;top:151px;width:1px;height:936px;background:#e3e3e3;"></div>
<div style="left:517px;top:150px;width:1px;height:937px;background:#a0a0a0;"></div>
<div style="left:518px;top:150px;width:1px;height:938px;background:#696969;"></div>
<div style="left:2px;top:1086px;width:516px;height:1px;background:#a0a0a0;"></div>
<div style="left:2px;top:1087px;width:517px;height:1px;background:#696969;"></div>
<div style="left:5px;top:154px;width:510px;height:930px;background:#ffffff;"></div>
<div style="left:5px;top:154px;width:510px;height:1px;background:#a0a0a0;"></div>
<div style="left:5px;top:154px;width:1px;height:930px;background:#a0a0a0;"></div>
<div style="left:6px;top:155px;width:508px;height:1px;background:#696969;"></div>
<div style="left:6px;top:155px;width:1px;height:928px;background:#696969;"></div>
<div style="left:6px;top:1082px;width:508px;height:1px;background:#e3e3e3;"></div>
<div style="left:513px;top:155px;width:1px;height:928px;background:#e3e3e3;"></div>
<div style="left:15px;top:169px;width:1px;height:139px;background:repeating-linear-gradient(180deg,#a0a0a0 0 1px,transparent 1px 2px)"></div>
<div style="left:34px;top:170px;width:1px;height:122px;background:repeating-linear-gradient(180deg,#a0a0a0 0 1px,transparent 1px 2px)"></div>
<div style="left:53px;top:205px;width:1px;height:7px;background:repeating-linear-gradient(180deg,#a0a0a0 0 1px,transparent 1px 2px)"></div>
<div style="left:72px;top:221px;width:1px;height:23px;background:repeating-linear-gradient(180deg,#a0a0a0 0 1px,transparent 1px 2px)"></div>
<div style="left:11px;top:160px;width:7px;height:7px;border:1px solid #848484;background:#fff"></div>
<div style="left:13px;top:164px;width:5px;height:1px;background:#000;"></div>
<div style="left:21px;top:164px;width:6px;height:1px;background:repeating-linear-gradient(90deg,#a0a0a0 0 1px,transparent 1px 2px)"></div>
<svg style="left:26px;top:157px;" width="16" height="16" viewBox="0 0 16 16"><defs><radialGradient id="rb" cx="0.45" cy="0.3" r="0.7"><stop offset="0" stop-color="#ffb8a0"/><stop offset="0.35" stop-color="#ff5a30"/><stop offset="1" stop-color="#c81800"/></radialGradient></defs><path d="M0 13L5.5 1 10 13z" fill="#2a78d8"/><rect x="8.5" y="6" width="6.5" height="7" fill="#8ad838" stroke="#5a9a30" stroke-width="0.8"/><circle cx="7" cy="10" r="3.9" fill="url(#rb)"/></svg>
<span class="t" style="left:47px;top:157.84px;font-size:12px;color:#000;transform:scaleX(0.92);transform-origin:0 0;">Проекты</span>
<div style="left:30px;top:176px;width:7px;height:7px;border:1px solid #848484;background:#fff"></div>
<div style="left:32px;top:180px;width:5px;height:1px;background:#000;"></div>
<div style="left:34px;top:178px;width:1px;height:5px;background:#000;"></div>
<div style="left:40px;top:180px;width:6px;height:1px;background:repeating-linear-gradient(90deg,#a0a0a0 0 1px,transparent 1px 2px)"></div>
<svg style="left:45px;top:173px;" width="16" height="16" viewBox="0 0 16 16"><path d="M0.5 1.5h6l1 1.5h8v11h-15z" fill="url(#fg)" stroke="#b5a040"/><defs><linearGradient id="fg" x1="0" y1="1" x2="1" y2="0"><stop offset="0" stop-color="#ffff00"/><stop offset="1" stop-color="#ff8c00"/></linearGradient></defs></svg>
<span class="t" style="left:66px;top:173.84px;font-size:12px;color:#000;transform:scaleX(0.92);transform-origin:0 0;">Новая папка</span>
<div style="left:30px;top:192px;width:7px;height:7px;border:1px solid #848484;background:#fff"></div>
<div style="left:32px;top:196px;width:5px;height:1px;background:#000;"></div>
<div style="left:40px;top:196px;width:6px;height:1px;background:repeating-linear-gradient(90deg,#a0a0a0 0 1px,transparent 1px 2px)"></div>
<svg style="left:45px;top:189px;" width="16" height="16" viewBox="0 0 16 16"><rect x="5.5" y="3.5" width="5" height="11" fill="#3a80d8" stroke="#2a68c0" stroke-width="0.8"/><rect x="0.5" y="6.5" width="5" height="8" fill="#3a80d8" stroke="#2a68c0" stroke-width="0.8"/><rect x="10.5" y="6.5" width="5" height="8" fill="#3a80d8" stroke="#2a68c0" stroke-width="0.8"/><path d="M8 4.5v9M3 7.5v6M13 7.5v6" stroke="#c0d8f8" stroke-width="2.2" stroke-dasharray="1.2 0.6"/><path d="M6 3.5V0" stroke="#333" stroke-width="0.9"/><path d="M6.5 0h4l-1 1.2 1 1.3h-4z" fill="#e82020"/></svg>
<span class="t" style="left:66px;top:189.84px;font-size:12px;color:#000;transform:scaleX(0.92);transform-origin:0 0;">Новый проект 9</span>
<div style="left:49px;top:208px;width:7px;height:7px;border:1px solid #848484;background:#fff"></div>
<div style="left:51px;top:212px;width:5px;height:1px;background:#000;"></div>
<div style="left:59px;top:212px;width:6px;height:1px;background:repeating-linear-gradient(90deg,#a0a0a0 0 1px,transparent 1px 2px)"></div>
<svg style="left:64px;top:205px;" width="16" height="16" viewBox="0 0 16 16"><rect x="1" y="0.5" width="2.5" height="15" fill="#fff" stroke="#8a8a8a" stroke-width="0.8"/><path d="M1.5 3h2M1.5 6h2M1.5 9h2M1.5 12h2" stroke="#8a8a8a" stroke-width="0.6"/><path d="M1 0.5h11" stroke="#8a8a8a"/><path d="M0 0h3v1.5H0z" fill="#a070e0"/><path d="M9 0.5L4 7.5M9 0.5l5 7" stroke="#8a3020" stroke-width="0.9" fill="none"/><path d="M12 0v8h3.5V4l-1.5-1V0z" fill="#9a66e8"/><defs><linearGradient id="ob" x1="0" y1="0" x2="0" y2="1"><stop offset="0" stop-color="#f08020"/><stop offset="1" stop-color="#a04010"/></linearGradient></defs><rect x="4" y="7" width="11.5" height="2.8" fill="url(#ob)"/><rect x="7" y="10" width="8.5" height="6" fill="#2a8af0"/><path d="M8 11.5h6M8 13.5h6" stroke="#c8e4ff" stroke-width="0.8" stroke-dasharray="1 1"/></svg>
<div style="left:84px;top:204px;width:154px;height:16px;background:#0078d7;outline:1px dotted #ff8c00;outline-offset:-1px;"></div>
<div style="left:84px;top:204px;width:152px;height:14px;border:1px dotted #000;opacity:0.55"></div>
<span class="t" style="left:85px;top:205.84px;font-size:12px;color:#fff;transform:scaleX(0.92);transform-origin:0 0;">Новый объект строительства</span>
<div style="left:68px;top:224px;width:7px;height:7px;border:1px solid #848484;background:#fff"></div>
<div style="left:70px;top:228px;width:5px;height:1px;background:#000;"></div>
<div style="left:72px;top:226px;width:1px;height:5px;background:#000;"></div>
<div style="left:78px;top:228px;width:6px;height:1px;background:repeating-linear-gradient(90deg,#a0a0a0 0 1px,transparent 1px 2px)"></div>
<svg style="left:83px;top:221px;" width="16" height="16" viewBox="0 0 16 16"><path d="M0.5 9.5L14 12.5 13 16 0.5 13z" fill="#d4d8dc" stroke="#9aa4aa" stroke-width="0.6"/><path d="M1 11l12 3" stroke="#aab" stroke-width="0.5"/><path d="M2.5 2L15.5 5 14 12.5 0.5 9.5z" fill="#3d9a5c" stroke="#2c7a48" stroke-width="0.6"/><path d="M8 4.5l5 1.2" stroke="#e8f4e8" stroke-width="1.4"/></svg>
<span class="t" style="left:104px;top:221.84px;font-size:12px;color:#000;transform:scaleX(0.92);transform-origin:0 0;">Смета ЛС-01-01</span>
<div style="left:68px;top:240px;width:7px;height:7px;border:1px solid #848484;background:#fff"></div>
<div style="left:70px;top:244px;width:5px;height:1px;background:#000;"></div>
<div style="left:72px;top:242px;width:1px;height:5px;background:#000;"></div>
<div style="left:78px;top:244px;width:6px;height:1px;background:repeating-linear-gradient(90deg,#a0a0a0 0 1px,transparent 1px 2px)"></div>
<svg style="left:83px;top:237px;" width="16" height="16" viewBox="0 0 16 16"><path d="M0.5 9.5L14 12.5 13 16 0.5 13z" fill="#d4d8dc" stroke="#9aa4aa" stroke-width="0.6"/><path d="M1 11l12 3" stroke="#aab" stroke-width="0.5"/><path d="M2.5 2L15.5 5 14 12.5 0.5 9.5z" fill="#3d9a5c" stroke="#2c7a48" stroke-width="0.6"/><path d="M8 4.5l5 1.2" stroke="#e8f4e8" stroke-width="1.4"/></svg>
<span class="t" style="left:104px;top:237.84px;font-size:12px;color:#000;transform:scaleX(0.92);transform-origin:0 0;">Смета ЛС-02-01</span>
<div style="left:30px;top:256px;width:7px;height:7px;border:1px solid #848484;background:#fff"></div>
<div style="left:32px;top:260px;width:5px;height:1px;background:#000;"></div>
<div style="left:34px;top:258px;width:1px;height:5px;background:#000;"></div>
<div style="left:40px;top:260px;width:6px;height:1px;background:repeating-linear-gradient(90deg,#a0a0a0 0 1px,transparent 1px 2px)"></div>
<svg style="left:45px;top:253px;" width="16" height="16" viewBox="0 0 16 16"><path d="M1 9l7-7 7 7" fill="none" stroke="#e07a20" stroke-width="1.4"/><rect x="3" y="1" width="2" height="5" fill="#e8a03a"/><path d="M2.5 8.5v7h11v-7" fill="#fff" stroke="#888"/><rect x="4" y="10" width="3" height="6" fill="#f0a030"/><rect x="9" y="10" width="3" height="3" fill="#3a8ae0"/><path d="M1 15.5h14" stroke="#666"/></svg>
<span class="t" style="left:66px;top:253.84px;font-size:12px;color:#000;transform:scaleX(0.92);transform-origin:0 0;">Новый объект</span>
<div style="left:34px;top:276px;width:12px;height:1px;background:repeating-linear-gradient(90deg,#a0a0a0 0 1px,transparent 1px 2px)"></div>
<svg style="left:45px;top:269px;" width="16" height="16" viewBox="0 0 16 16"><path d="M2.5 1.5h5l1 1.5h5v8h-11z" fill="#f8e060" stroke="#c9b040"/><path d="M0 10q3 6 8 5q5 0 7-4l-3 1q-2 1-4 0z" fill="#f0a050" stroke="#c86a20"/><path d="M15 9v6" stroke="#333"/></svg>
<span class="t" style="left:66px;top:269.84px;font-size:12px;color:#000;transform:scaleX(0.92);transform-origin:0 0;">ОБМЕН</span>
<div style="left:30px;top:288px;width:7px;height:7px;border:1px solid #848484;background:#fff"></div>
<div style="left:32px;top:292px;width:5px;height:1px;background:#000;"></div>
<div style="left:34px;top:290px;width:1px;height:5px;background:#000;"></div>
<div style="left:40px;top:292px;width:6px;height:1px;background:repeating-linear-gradient(90deg,#a0a0a0 0 1px,transparent 1px 2px)"></div>
<svg style="left:45px;top:285px;" width="16" height="16" viewBox="0 0 16 16"><path d="M5 4.5a3 3 0 0 1 6 0z" fill="#e8f0f8" stroke="#8aa0b8" stroke-width="0.8"/><path d="M4 5h8l-0.5 11h-7z" fill="#2c3c5a"/><path d="M2 8.5h12" stroke="#2c3c5a" stroke-width="1.2"/><g fill="#d0dcec"><circle cx="6" cy="7" r="0.6"/><circle cx="8" cy="7" r="0.6"/><circle cx="10" cy="7" r="0.6"/><circle cx="5.5" cy="10" r="0.6"/><circle cx="7.5" cy="10" r="0.6"/><circle cx="9.5" cy="10" r="0.6"/><circle cx="6.5" cy="12" r="0.6"/><circle cx="8.5" cy="12" r="0.6"/><circle cx="10" cy="12" r="0.6"/><circle cx="5.5" cy="14" r="0.6"/><circle cx="7.5" cy="14" r="0.6"/><circle cx="9.5" cy="14" r="0.6"/></g><path d="M4 16h8" stroke="#2c3c5a"/></svg>
<span class="t" style="left:66px;top:285.84px;font-size:12px;color:#000;transform:scaleX(0.92);transform-origin:0 0;">КОРЗИНА</span>
<div style="left:11px;top:304px;width:7px;height:7px;border:1px solid #848484;background:#fff"></div>
<div style="left:13px;top:308px;width:5px;height:1px;background:#000;"></div>
<div style="left:15px;top:306px;width:1px;height:5px;background:#000;"></div>
<div style="left:21px;top:308px;width:6px;height:1px;background:repeating-linear-gradient(90deg,#a0a0a0 0 1px,transparent 1px 2px)"></div>
<svg style="left:26px;top:301px;" width="16" height="16" viewBox="0 0 16 16"><path d="M0.5 9.5L13 12.5 12 16 0.5 13z" fill="#dfe6ee" stroke="#8aa0c0" stroke-width="0.6"/><path d="M3.5 2L15.5 3.5 13 12.5 0.5 9.5z" fill="#3a8ae8" stroke="#2a6ac8" stroke-width="0.6"/><path d="M8 4.5l5 0.8" stroke="#a8d0ff" stroke-width="1.2"/></svg>
<span class="t" style="left:47px;top:301.84px;font-size:12px;color:#000;transform:scaleX(0.92);transform-origin:0 0;">Нормативы</span>
<span class="t" style="left:139px;top:173.84px;font-size:12px;color:#0000ff;transform:scaleX(0.92);transform-origin:0 0;">[44]</span>
<span class="t" style="left:155px;top:189.84px;font-size:12px;color:#0000ff;transform:scaleX(0.92);transform-origin:0 0;">[2]</span>
<span class="t" style="left:244px;top:205.84px;font-size:12px;color:#0000ff;transform:scaleX(0.92);transform-origin:0 0;">[2]</span>
<span class="t" style="left:113px;top:269.84px;font-size:12px;color:#0000ff;transform:scaleX(0.92);transform-origin:0 0;">[0]</span>
<div style="left:522px;top:130px;width:1236px;height:1px;background:#ffffff;"></div>
<div style="left:522px;top:130px;width:1px;height:958px;background:#ffffff;"></div>
<div style="left:523px;top:131px;width:1px;height:956px;background:#ffffff;"></div>
<div style="left:1757px;top:130px;width:1px;height:958px;background:#a0a0a0;"></div>
<div style="left:1756px;top:131px;width:1px;height:20px;background:#ffffff;"></div>
<div style="left:1756px;top:151px;width:1px;height:936px;background:#a0a0a0;"></div>
<div style="left:1755px;top:151px;width:1px;height:936px;background:#696969;"></div>
<div style="left:522px;top:1086px;width:1236px;height:1px;background:#a0a0a0;"></div>
<div style="left:522px;top:1087px;width:1236px;height:1px;background:#696969;"></div>
<div style="left:524px;top:151px;width:1231px;height:1px;background:#ffffff;"></div>
<div style="left:524px;top:152px;width:1px;height:934px;background:#e3e3e3;"></div>
<div style="left:527px;top:134px;width:71px;height:1px;background:#ffffff;"></div>
<div style="left:526px;top:135px;width:1px;height:17px;background:#ffffff;"></div>
<span class="t" style="left:531px;top:136.84px;font-size:12px;color:#000;transform:scaleX(0.92);transform-origin:0 0;">Содержание</span>
<div style="left:599px;top:132px;width:74px;height:21px;background:#f0f0f0;"></div>
<div style="left:599px;top:132px;width:74px;height:1px;background:#ffffff;"></div>
<div style="left:599px;top:132px;width:1px;height:21px;background:#ffffff;"></div>
<div style="left:672px;top:132px;width:1px;height:20px;background:#696969;"></div>
<div style="left:671px;top:133px;width:1px;height:19px;background:#a0a0a0;"></div>
<span class="t" style="left:606px;top:134.84px;font-size:12px;color:#000;transform:scaleX(0.92);transform-origin:0 0;">Параметры</span>
<div style="left:674px;top:134px;width:98px;height:1px;background:#ffffff;"></div>
<div style="left:673px;top:135px;width:1px;height:17px;background:#ffffff;"></div>
<div style="left:772px;top:135px;width:1px;height:17px;background:#696969;"></div>
<div style="left:771px;top:136px;width:1px;height:16px;background:#a0a0a0;"></div>
<span class="t" style="left:677px;top:136.84px;font-size:12px;color:#000;transform:scaleX(0.92);transform-origin:0 0;">Объектная смета</span>
<div style="left:774px;top:134px;width:57px;height:1px;background:#ffffff;"></div>
<div style="left:773px;top:135px;width:1px;height:17px;background:#ffffff;"></div>
<div style="left:831px;top:135px;width:1px;height:17px;background:#696969;"></div>
<div style="left:830px;top:136px;width:1px;height:16px;background:#a0a0a0;"></div>
<span class="t" style="left:779px;top:136.84px;font-size:12px;color:#000;transform:scaleX(0.92);transform-origin:0 0;">ССР и СЗ</span>
<div style="left:833px;top:134px;width:42px;height:1px;background:#ffffff;"></div>
<div style="left:832px;top:135px;width:1px;height:17px;background:#ffffff;"></div>
<div style="left:875px;top:135px;width:1px;height:17px;background:#696969;"></div>
<div style="left:874px;top:136px;width:1px;height:16px;background:#a0a0a0;"></div>
<span class="t" style="left:838px;top:136.84px;font-size:12px;color:#000;transform:scaleX(0.92);transform-origin:0 0;">НМЦК</span>
<div style="left:877px;top:134px;width:40px;height:1px;background:#ffffff;"></div>
<div style="left:876px;top:135px;width:1px;height:17px;background:#ffffff;"></div>
<div style="left:917px;top:135px;width:1px;height:17px;background:#696969;"></div>
<div style="left:916px;top:136px;width:1px;height:16px;background:#a0a0a0;"></div>
<span class="t" style="left:882px;top:136.84px;font-size:12px;color:#000;transform:scaleX(0.92);transform-origin:0 0;">ВОР</span>
<div style="left:919px;top:134px;width:195px;height:1px;background:#ffffff;"></div>
<div style="left:918px;top:135px;width:1px;height:17px;background:#ffffff;"></div>
<div style="left:1114px;top:135px;width:1px;height:17px;background:#696969;"></div>
<div style="left:1113px;top:136px;width:1px;height:16px;background:#a0a0a0;"></div>
<span class="t" style="left:924px;top:136.84px;font-size:12px;color:#000;transform:scaleX(0.92);transform-origin:0 0;">Исполнение Сметы контракта (ЕИС)</span>
<div style="left:527px;top:155px;width:1226px;height:1px;background:#a0a0a0;"></div>
<div style="left:527px;top:156px;width:1226px;height:1px;background:#ffffff;"></div>
<span class="t" style="left:534px;top:166.84px;font-size:12px;color:#000;transform:scaleX(0.92);transform-origin:0 0;">Типовые настройки, которые будут применены к новым объектам:</span>
<div style="left:535px;top:185px;width:1212px;height:15px;background:#ffffff;"></div>
<span class="t" style="left:537px;top:186.84px;font-size:12px;color:#000;transform:scaleX(0.92);transform-origin:0 0;">ФСНБ-2022_И18</span>
<div style="left:1733px;top:186px;width:13px;height:13px;background:#f0f0f0;"></div>
<svg style="left:1736px;top:191px;" width="7" height="4" viewBox="0 0 7 4"><path d="M0 0h7L3.5 4z" fill="#000"/></svg>
<div style="left:569px;top:208px;width:13px;height:13px;background:#ffffff;"></div>
<div style="left:569px;top:208px;width:13px;height:1px;background:#a0a0a0;"></div>
<div style="left:569px;top:208px;width:1px;height:13px;background:#a0a0a0;"></div>
<div style="left:569px;top:220px;width:13px;height:1px;background:#e3e3e3;"></div>
<div style="left:581px;top:208px;width:1px;height:13px;background:#e3e3e3;"></div>
<span class="t" style="left:586px;top:208.84px;font-size:12px;color:#000;transform:scaleX(0.92);transform-origin:0 0;">Распространить на вложенные папки</span>
<div style="left:527px;top:231px;width:1225px;height:1px;background:#a0a0a0;"></div>
<div style="left:527px;top:231px;width:1px;height:560px;background:#a0a0a0;"></div>
<div style="left:528px;top:232px;width:1223px;height:1px;background:#ffffff;"></div>
<div style="left:528px;top:232px;width:1px;height:558px;background:#ffffff;"></div>
<div style="left:527px;top:790px;width:1225px;height:1px;background:#a0a0a0;"></div>
<div style="left:1751px;top:231px;width:1px;height:560px;background:#a0a0a0;"></div>
<div style="left:527px;top:791px;width:1226px;height:1px;background:#ffffff;"></div>
<div style="left:1752px;top:231px;width:1px;height:561px;background:#ffffff;"></div>
<div style="left:529px;top:233px;width:1222px;height:23px;background:#c0c0c0;"></div>
<span class="t" style="left:534px;top:238.84px;font-size:12px;color:#000;font-weight:bold;">Наименования</span>
<span class="t" style="left:534px;top:261.84px;font-size:12px;color:#000;transform:scaleX(0.92);transform-origin:0 0;">Шифр</span>
<div style="left:535px;top:278px;width:1208px;height:15px;background:#ffffff;"></div>
<span class="t" style="left:537px;top:279.84px;font-size:12px;color:#000;transform:scaleX(0.92);transform-origin:0 0;">Новый объект строительства</span>
<span class="t" style="left:534px;top:299.84px;font-size:12px;color:#000;transform:scaleX(0.92);transform-origin:0 0;">Полное наименование</span>
<div style="left:535px;top:316px;width:1208px;height:15px;background:#ffffff;"></div>
<span class="t" style="left:537px;top:317.84px;font-size:12px;color:#000;transform:scaleX(0.92);transform-origin:0 0;">Новый объект строительства</span>
<span class="t" style="left:534px;top:337.84px;font-size:12px;color:#000;transform:scaleX(0.92);transform-origin:0 0;">Основание:</span>
<div style="left:533px;top:352px;width:1212px;height:41px;background:#ffffff;"></div>
<div style="left:533px;top:352px;width:1212px;height:1px;background:#a0a0a0;"></div>
<div style="left:533px;top:352px;width:1px;height:41px;background:#a0a0a0;"></div>
<div style="left:533px;top:392px;width:1212px;height:1px;background:#e3e3e3;"></div>
<div style="left:1744px;top:352px;width:1px;height:41px;background:#e3e3e3;"></div>
<span class="t" style="left:533px;top:398.84px;font-size:12px;color:#000;transform:scaleX(0.92);transform-origin:0 0;">Адрес объекта:</span>
<div style="left:531px;top:413px;width:1212px;height:44px;background:#ffffff;"></div>
<div style="left:531px;top:413px;width:1212px;height:1px;background:#a0a0a0;"></div>
<div style="left:531px;top:413px;width:1px;height:44px;background:#a0a0a0;"></div>
<div style="left:531px;top:456px;width:1212px;height:1px;background:#e3e3e3;"></div>
<div style="left:1742px;top:413px;width:1px;height:44px;background:#e3e3e3;"></div>
<div style="left:525px;top:452px;width:1222px;height:48px;border:3px solid #ff0000;background:#f0f0f0"></div>
<span class="t" style="left:534px;top:459.84px;font-size:12px;color:#000;transform:scaleX(0.92);transform-origin:0 0;">Регион:</span>
<div style="left:593px;top:461px;width:1151px;height:15px;background:#ffffff;"></div>
<span class="t" style="left:595px;top:462.84px;font-size:12px;color:#707070;transform:scaleX(0.92);transform-origin:0 0;">34 Волгоградская область</span>
<span class="t" style="left:534px;top:482.84px;font-size:12px;color:#000;transform:scaleX(0.92);transform-origin:0 0;">Подрайон:</span>
<div style="left:593px;top:484px;width:1151px;height:15px;background:#ffffff;"></div>
<span class="t" style="left:595px;top:485.84px;font-size:12px;color:#707070;transform:scaleX(0.92);transform-origin:0 0;">Центральный</span>
<span class="t" style="left:538px;top:519.84px;font-size:12px;color:#000;transform:scaleX(0.92);transform-origin:0 0;">Величина строительного объёма:</span>
<div style="left:715px;top:517px;width:117px;height:15px;background:#ffffff;"></div>
<span class="t" style="right:928px;top:519.84px;font-size:12px;color:#000;transform:scaleX(0.92);transform-origin:100% 0;">0</span>
<span class="t" style="left:849px;top:519.84px;font-size:12px;color:#000;transform:scaleX(0.92);transform-origin:0 0;">Единица измерения:</span>
<div style="left:961px;top:517px;width:117px;height:15px;background:#ffffff;"></div>
<span class="t" style="left:538px;top:544.84px;font-size:12px;color:#000;transform:scaleX(0.92);transform-origin:0 0;">№ главы ССР:</span>
<div style="left:715px;top:541px;width:117px;height:15px;background:#ffffff;"></div>
<span class="t" style="right:928px;top:542.84px;font-size:12px;color:#000;transform:scaleX(0.92);transform-origin:100% 0;">0</span>
<span class="t" style="left:536px;top:571.84px;font-size:12px;color:#000;transform:scaleX(0.92);transform-origin:0 0;">Сметные нормы, % к СМР:</span>
<span class="t" style="left:538px;top:588.84px;font-size:12px;color:#000;transform:scaleX(0.92);transform-origin:0 0;">затраты на строительство титульных временных зданий и сооружений:</span>
<div style="left:537px;top:607px;width:77px;height:15px;background:#ffffff;"></div>
<div style="left:584px;top:608px;width:13px;height:13px;background:#f0f0f0;"></div>
<div style="left:600px;top:608px;width:13px;height:13px;background:#f0f0f0;"></div>
<svg style="left:586px;top:609px;" width="10" height="11" viewBox="0 0 10 11"><path d="M1 1l8 9M9 1L1 10" stroke="#f04a1e" stroke-width="1.4"/></svg>
<div style="left:601px;top:613px;width:2px;height:2px;background:#000;"></div>
<div style="left:605px;top:613px;width:2px;height:2px;background:#000;"></div>
<div style="left:609px;top:613px;width:2px;height:2px;background:#000;"></div>
<div style="left:624px;top:607px;width:1115px;height:15px;background:#ffffff;"></div>
<div style="left:535px;top:628px;width:81px;height:1px;background:#a0a0a0;"></div>
<div style="left:535px;top:628px;width:1px;height:19px;background:#a0a0a0;"></div>
<div style="left:535px;top:646px;width:81px;height:1px;background:#ffffff;"></div>
<div style="left:615px;top:628px;width:1px;height:19px;background:#ffffff;"></div>
<span class="t" style="right:1146px;top:631.84px;font-size:12px;color:#6e6e6e;transform:scaleX(0.92);transform-origin:100% 0;">0,8</span>
<div style="left:626px;top:632px;width:13px;height:13px;background:#ffffff;"></div>
<div style="left:626px;top:632px;width:13px;height:1px;background:#a0a0a0;"></div>
<div style="left:626px;top:632px;width:1px;height:13px;background:#a0a0a0;"></div>
<div style="left:626px;top:644px;width:13px;height:1px;background:#e3e3e3;"></div>
<div style="left:638px;top:632px;width:1px;height:13px;background:#e3e3e3;"></div>
<span class="t" style="left:643px;top:632.84px;font-size:12px;color:#000;transform:scaleX(0.92);transform-origin:0 0;">Поправка на кап. ремонт/реконструкцию</span>
<span class="t" style="left:537px;top:651.84px;font-size:12px;color:#000;transform:scaleX(0.92);transform-origin:0 0;">дополнительные затраты при производстве работ в зимнее время:</span>
<div style="left:537px;top:670px;width:77px;height:15px;background:#ffffff;"></div>
<div style="left:584px;top:671px;width:13px;height:13px;background:#f0f0f0;"></div>
<div style="left:600px;top:671px;width:13px;height:13px;background:#f0f0f0;"></div>
<svg style="left:586px;top:672px;" width="10" height="11" viewBox="0 0 10 11"><path d="M1 1l8 9M9 1L1 10" stroke="#f04a1e" stroke-width="1.4"/></svg>
<div style="left:601px;top:676px;width:2px;height:2px;background:#000;"></div>
<div style="left:605px;top:676px;width:2px;height:2px;background:#000;"></div>
<div style="left:609px;top:676px;width:2px;height:2px;background:#000;"></div>
<div style="left:624px;top:670px;width:1115px;height:15px;background:#ffffff;"></div>
<span class="t" style="left:538px;top:691.84px;font-size:12px;color:#000;transform:scaleX(0.92);transform-origin:0 0;">Температурная зона:</span>
<div style="left:537px;top:710px;width:77px;height:15px;background:#ffffff;"></div>
<div style="left:584px;top:711px;width:13px;height:13px;background:#f0f0f0;"></div>
<div style="left:600px;top:711px;width:13px;height:13px;background:#f0f0f0;"></div>
<svg style="left:586px;top:712px;" width="10" height="11" viewBox="0 0 10 11"><path d="M1 1l8 9M9 1L1 10" stroke="#f04a1e" stroke-width="1.4"/></svg>
<div style="left:601px;top:716px;width:2px;height:2px;background:#000;"></div>
<div style="left:605px;top:716px;width:2px;height:2px;background:#000;"></div>
<div style="left:609px;top:716px;width:2px;height:2px;background:#000;"></div>
<div style="left:624px;top:710px;width:1115px;height:15px;background:#ffffff;"></div>
<span class="t" style="left:538px;top:735.84px;font-size:12px;color:#000;transform:scaleX(0.92);transform-origin:0 0;">Коэффициент:</span>
<div style="left:620px;top:733px;width:77px;height:15px;background:#ffffff;"></div>
<div style="left:535px;top:751px;width:81px;height:1px;background:#a0a0a0;"></div>
<div style="left:535px;top:751px;width:1px;height:19px;background:#a0a0a0;"></div>
<div style="left:535px;top:769px;width:81px;height:1px;background:#ffffff;"></div>
<div style="left:615px;top:751px;width:1px;height:19px;background:#ffffff;"></div>
<span class="t" style="right:1146px;top:754.84px;font-size:12px;color:#6e6e6e;transform:scaleX(0.92);transform-origin:100% 0;">0,8</span>
<div style="left:626px;top:755px;width:13px;height:13px;background:#ffffff;"></div>
<div style="left:626px;top:755px;width:13px;height:1px;background:#a0a0a0;"></div>
<div style="left:626px;top:755px;width:1px;height:13px;background:#a0a0a0;"></div>
<div style="left:626px;top:767px;width:13px;height:1px;background:#e3e3e3;"></div>
<div style="left:638px;top:755px;width:1px;height:13px;background:#e3e3e3;"></div>
<span class="t" style="left:643px;top:755.84px;font-size:12px;color:#000;transform:scaleX(0.92);transform-origin:0 0;">Поправка на кап. ремонт</span>
<div style="left:527px;top:792px;width:1225px;height:1px;background:#a0a0a0;"></div>
<div style="left:527px;top:792px;width:1px;height:27px;background:#a0a0a0;"></div>
<div style="left:528px;top:793px;width:1223px;height:1px;background:#ffffff;"></div>
<div style="left:528px;top:793px;width:1px;height:25px;background:#ffffff;"></div>
<div style="left:527px;top:818px;width:1225px;height:1px;background:#a0a0a0;"></div>
<div style="left:1751px;top:792px;width:1px;height:27px;background:#a0a0a0;"></div>
<div style="left:527px;top:819px;width:1226px;height:1px;background:#ffffff;"></div>
<div style="left:1752px;top:792px;width:1px;height:28px;background:#ffffff;"></div>
<div style="left:529px;top:794px;width:1222px;height:23px;background:#c0c0c0;"></div>
<span class="t" style="left:534px;top:799.84px;font-size:12px;color:#000;font-weight:bold;">Должностные лица</span>
<div style="left:527px;top:1053px;width:1225px;height:1px;background:#a0a0a0;"></div>
<div style="left:527px;top:1053px;width:1px;height:29px;background:#a0a0a0;"></div>
<div style="left:527px;top:1082px;width:1226px;height:1px;background:#ffffff;"></div>
<div style="left:1752px;top:1053px;width:1px;height:30px;background:#ffffff;"></div>
<div style="left:1557px;top:1056px;width:95px;height:25px;background:#f0f0f0;"></div>
<div style="left:1557px;top:1056px;width:95px;height:1px;background:#ffffff;"></div>
<div style="left:1557px;top:1056px;width:1px;height:25px;background:#ffffff;"></div>
<div style="left:1557px;top:1080px;width:95px;height:1px;background:#696969;"></div>
<div style="left:1651px;top:1056px;width:1px;height:25px;background:#696969;"></div>
<div style="left:1558px;top:1079px;width:93px;height:1px;background:#a0a0a0;"></div>
<div style="left:1650px;top:1057px;width:1px;height:23px;background:#a0a0a0;"></div>
<span class="t" style="left:1577px;top:1061.84px;font-size:12px;color:#a0a0a0;transform:scaleX(0.92);transform-origin:0 0;"><u>П</u>рименить</span>
<div style="left:1655px;top:1056px;width:95px;height:25px;background:#f0f0f0;"></div>
<div style="left:1655px;top:1056px;width:95px;height:1px;background:#ffffff;"></div>
<div style="left:1655px;top:1056px;width:1px;height:25px;background:#ffffff;"></div>
<div style="left:1655px;top:1080px;width:95px;height:1px;background:#696969;"></div>
<div style="left:1749px;top:1056px;width:1px;height:25px;background:#696969;"></div>
<div style="left:1656px;top:1079px;width:93px;height:1px;background:#a0a0a0;"></div>
<div style="left:1748px;top:1057px;width:1px;height:23px;background:#a0a0a0;"></div>
<span class="t" style="left:1683px;top:1061.84px;font-size:12px;color:#a0a0a0;transform:scaleX(0.92);transform-origin:0 0;"><u>О</u>тмена</span>
<div style="left:1px;top:1088px;width:1757px;height:1px;background:#ffffff;"></div>
<div style="left:90px;top:1089px;width:1px;height:29px;background:#a0a0a0;"></div>
<div style="left:391px;top:1089px;width:1px;height:29px;background:#a0a0a0;"></div>
<div style="left:1688px;top:1089px;width:1px;height:29px;background:#a0a0a0;"></div>
<div style="left:1722px;top:1089px;width:1px;height:29px;background:#a0a0a0;"></div>
<div style="left:1756px;top:1089px;width:1px;height:29px;background:#a0a0a0;"></div>
<div style="left:4px;top:1091px;width:86px;height:1px;background:#a0a0a0;"></div>
<div style="left:4px;top:1091px;width:1px;height:27px;background:#a0a0a0;"></div>
<div style="left:4px;top:1117px;width:86px;height:1px;background:#ffffff;"></div>
<div style="left:89px;top:1091px;width:1px;height:27px;background:#ffffff;"></div>
<div style="left:93px;top:1091px;width:298px;height:1px;background:#a0a0a0;"></div>
<div style="left:93px;top:1091px;width:1px;height:27px;background:#a0a0a0;"></div>
<div style="left:93px;top:1117px;width:298px;height:1px;background:#ffffff;"></div>
<div style="left:390px;top:1091px;width:1px;height:27px;background:#ffffff;"></div>
<div style="left:394px;top:1091px;width:1294px;height:1px;background:#a0a0a0;"></div>
<div style="left:394px;top:1091px;width:1px;height:27px;background:#a0a0a0;"></div>
<div style="left:394px;top:1117px;width:1294px;height:1px;background:#ffffff;"></div>
<div style="left:1687px;top:1091px;width:1px;height:27px;background:#ffffff;"></div>
<div style="left:1691px;top:1091px;width:31px;height:1px;background:#a0a0a0;"></div>
<div style="left:1691px;top:1091px;width:1px;height:27px;background:#a0a0a0;"></div>
<div style="left:1691px;top:1117px;width:31px;height:1px;background:#ffffff;"></div>
<div style="left:1721px;top:1091px;width:1px;height:27px;background:#ffffff;"></div>
<div style="left:1725px;top:1091px;width:30px;height:1px;background:#a0a0a0;"></div>
<div style="left:1725px;top:1091px;width:1px;height:27px;background:#a0a0a0;"></div>
<div style="left:1725px;top:1117px;width:30px;height:1px;background:#ffffff;"></div>
<div style="left:1754px;top:1091px;width:1px;height:27px;background:#ffffff;"></div>
<svg style="left:1697px;top:1095px;" width="18" height="18" viewBox="0 0 18 18"><rect x="1" y="1" width="16" height="16" rx="7" fill="#9a9a9a"/><rect x="8" y="8" width="2.4" height="6.5" fill="#fff"/><rect x="8" y="4.2" width="2.4" height="2.2" fill="#fff"/><path d="M2 1.5l14.5 14.5" stroke="#ff0000" stroke-width="2.2" stroke-linecap="round"/></svg>
<span class="t" style="left:1732px;top:1097.84px;font-size:12px;color:#000;transform:scaleX(0.92);transform-origin:0 0;">RU</span></body></html>
